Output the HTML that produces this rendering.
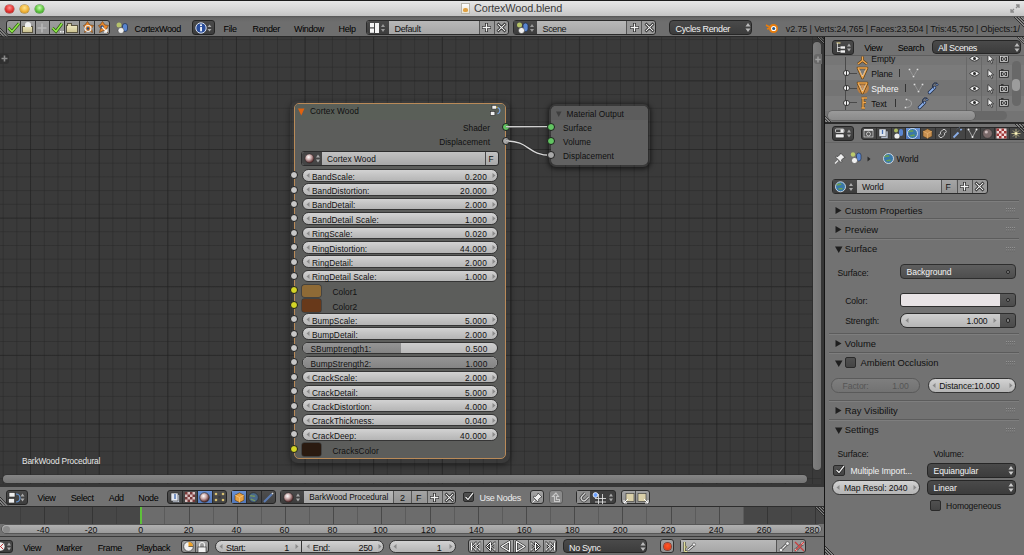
<!DOCTYPE html>
<html><head><meta charset="utf-8">
<style>
*{box-sizing:border-box;margin:0;padding:0}
html,body{width:1024px;height:555px;overflow:hidden;background:#3a3a3a;font-family:"Liberation Sans",sans-serif}
.a{position:absolute}
svg{display:block;overflow:visible}
.t{position:absolute;white-space:nowrap;line-height:1;font-family:"Liberation Sans",sans-serif;color:#000}
#title{left:0;top:0;width:1024px;height:16px;background:linear-gradient(#e6e6e6,#d6d6d6 55%,#c4c4c4);border-top:1px solid #1a1a1a}
#info{left:0;top:16px;width:1024px;height:21px;background:linear-gradient(#555,#686868 2px,#6e6e6e 6px,#6e6e6e);border-bottom:1px solid #2a2a2a}
#node{left:0;top:37px;width:824px;height:450px;background-color:#3a3a3a;
 background-image:
 linear-gradient(90deg, rgba(30,30,30,.42) 1px, transparent 1px),
 linear-gradient(rgba(30,30,30,.42) 1px, transparent 1px),
 linear-gradient(90deg, rgba(40,40,40,.5) 1px, transparent 1px),
 linear-gradient(rgba(40,40,40,.5) 1px, transparent 1px);
 background-size:68.65px 68.65px,68.65px 68.65px,13.73px 13.73px,13.73px 13.73px;
 background-position:30.1px 43.4px,30.1px 43.4px,2.64px 2.2px,2.64px 2.2px}
#sep{left:824px;top:37px;width:1px;height:518px;background:#232323}
#nhead{left:0;top:487px;width:824px;height:20px;background:#727272;border-bottom:1px solid #2d2d2d}
#tl{left:0;top:507px;width:824px;height:30px;background:#727272}
#thead{left:0;top:537px;width:824px;height:18px;background:#727272}
#outl{left:825px;top:37px;width:199px;height:86px;background:#727272}
#prop{left:825px;top:123px;width:199px;height:432px;background:#727272}

.bx{position:absolute;border:1px solid #1e1e1e;border-radius:3px;overflow:hidden}
.tool{background:linear-gradient(#a3a3a3,#8f8f8f)}
.dk{background:linear-gradient(#4a4a4a,#3c3c3c)}
.fld{background:linear-gradient(#b8b8b8,#a6a6a6)}
.num{background:linear-gradient(#c8c8c8,#b0b0b0 60%,#a8a8a8);border-radius:7px}
.hx{font-size:9px;letter-spacing:-0.35px;color:#000}
.vs{position:absolute;top:0;bottom:0;width:1px;background:#3a3a3a}
.ud{position:absolute;width:0;height:0;border-left:2.5px solid transparent;border-right:2.5px solid transparent}

.nt{font-size:8.3px;color:#101010;letter-spacing:0.05px}
.nv{font-size:8.3px;color:#111;letter-spacing:0.25px}
.nrow{border-radius:6.4px;border-color:#353535;background:linear-gradient(#d2d2d2,#bdbdbd 70%,#b5b5b5)}
.sk{position:absolute;width:8px;height:8px;border-radius:50%;border:0.9px solid #1c1c1c}

.ot{font-size:8.6px;color:#111;letter-spacing:-0.1px}
.pt{font-size:8.6px;color:#111;letter-spacing:-0.1px}
.ph{font-size:9.4px;color:#111;letter-spacing:0px}
</style></head><body>
<div id="title" class="a"></div>
<div class="a" style="left:5.3px;top:4.5px;width:8.6px;height:8.6px;border-radius:50%;background:radial-gradient(circle at 50% 35%,#ff8f8f,#e2332f 55%,#a61c1c);box-shadow:0 0 0 .5px #9a3a3a"></div>
<div class="a" style="left:20.3px;top:4.5px;width:8.6px;height:8.6px;border-radius:50%;background:radial-gradient(circle at 50% 35%,#ffe690,#f1b43a 55%,#b57c17);box-shadow:0 0 0 .5px #a0781e"></div>
<div class="a" style="left:35.3px;top:4.5px;width:8.6px;height:8.6px;border-radius:50%;background:radial-gradient(circle at 50% 35%,#c8ffb0,#5fc53f 55%,#2f8a1e);box-shadow:0 0 0 .5px #3d8a2e"></div>
<div class="a" style="left:461px;top:3px;width:9px;height:11px;background:linear-gradient(#fdfdfd,#e9e3d2);border:1px solid #b9b5aa"><div class="a" style="left:1px;top:4px;width:5px;height:4px;background:#e0a040;border-radius:40%"></div></div>
<div class="t" style="left:474px;top:3.4px;font-size:10.9px;color:#3c3c3c;letter-spacing:-0.12px">CortexWood.blend</div>
<div class="a" style="left:1010px;top:4px;width:10px;height:9px"><svg width="10" height="9"><path d="M6 1h3v3M9 1L6 4M4 8H1V5M1 8l3-3" stroke="#8a8a8a" stroke-width="1.3" fill="none"/></svg></div>

<div id="info" class="a"></div>
<!-- info header -->
<div class="bx tool" style="left:6px;top:20px;width:104px;height:15px;background:linear-gradient(#9c9c9c,#929292);border-color:#2a2a2a"></div>
<div class="a" style="left:0;top:27px"><svg width="9" height="10"><path d="M0 1l8 8.5M0 4l5 5.5M0 7l2.5 2.8" stroke="#2a2a2a" stroke-width="1"/><path d="M0 2l7.2 7.8M0 5l4.3 4.8" stroke="#a8a8a8" stroke-width=".6"/></svg></div>
<div class="a" style="left:19.8px;top:21px;width:1px;height:13px;background:#333"></div>
<div class="a" style="left:34.5px;top:21px;width:1px;height:13px;background:#333"></div>
<div class="a" style="left:49.3px;top:21px;width:1px;height:13px;background:#333"></div>
<div class="a" style="left:64.3px;top:21px;width:1px;height:13px;background:#333"></div>
<div class="a" style="left:79.3px;top:21px;width:1px;height:13px;background:#333"></div>
<div class="a" style="left:94.3px;top:21px;width:1px;height:13px;background:#333"></div>
<div class="a" style="left:7px;top:22px"><svg width="13" height="11"><path d="M1.5 6l3.5 3.5L12 1.5" stroke="#2d5a10" stroke-width="3" fill="none"/><path d="M1.5 6l3.5 3.5L12 1.5" stroke="#8ee84a" stroke-width="1.6" fill="none"/></svg></div>
<div class="a" style="left:21.5px;top:22px;width:11px;height:11px"><div class="a" style="left:0;top:4px;width:11px;height:7px;background:linear-gradient(#e8e2b8,#c9c08f);border:1px solid #5a5440"></div><div class="a" style="left:3px;top:0;width:6px;height:5px;background:#f0f0f0;border-radius:3px 3px 0 0"></div></div>
<div class="a" style="left:37px;top:22.5px"><svg width="10" height="10"><path d="M5 0.5v9M0.5 5h9" stroke="#b8b8b8" stroke-width="1.6"/></svg></div>
<div class="a" style="left:51px;top:22px"><svg width="13" height="11"><path d="M1.5 6l3.5 3.5L11 1.5" stroke="#2d5a10" stroke-width="3" fill="none"/><path d="M1.5 6l3.5 3.5L11 1.5" stroke="#8ee84a" stroke-width="1.6" fill="none"/><rect x="9" y="9" width="1.5" height="1.5" fill="#eee"/><rect x="11.5" y="9" width="1.5" height="1.5" fill="#eee"/></svg></div>
<div class="a" style="left:66px;top:23px;width:12px;height:10px"><div class="a" style="left:0;top:2px;width:12px;height:8px;background:linear-gradient(#ece6bd,#cdc392);border:1px solid #5a5440"></div><div class="a" style="left:1px;top:0;width:5px;height:3px;background:#d9d2a8;border:1px solid #5a5440;border-bottom:none"></div></div>
<div class="a" style="left:81px;top:21px"><svg width="13" height="13"><path d="M6.5 0.5L9 4l3.5 .5-2 3 1 4-4-2-4 2 1-4-2-3L4 4z" fill="#e8862a" stroke="#6a3a10" stroke-width=".6"/><circle cx="7" cy="7.5" r="3" fill="none" stroke="#eee" stroke-width="1.2"/><circle cx="7" cy="7.5" r="1.3" fill="#2a4a7a"/></svg></div>
<div class="a" style="left:96px;top:21px"><svg width="13" height="13"><path d="M6.5 0.5L9 4l3.5 .5-2 3 1 4-4-2-4 2 1-4-2-3L4 4z" fill="#e8862a" stroke="#6a3a10" stroke-width=".6"/><circle cx="6" cy="6" r="1.8" fill="#2a4a7a"/><path d="M6 6l5 5M11 11h-3M11 11v-3" stroke="#f4f4f4" stroke-width="1.3"/></svg></div>
<div class="a" style="left:116px;top:22px"><svg width="14" height="12"><circle cx="3" cy="3" r="2.5" fill="#c8d86a" opacity=".8"/><rect x="6.5" y="1.5" width="5" height="8" rx="2.5" fill="#5a86d0" stroke="#1c2c4a" stroke-width=".7"/><circle cx="5" cy="8.5" r="3" fill="#f0f0f0" stroke="#333" stroke-width=".5"/></svg></div>
<div class="t hx" style="left:134.5px;top:24.5px">CortexWood</div>
<div class="bx dk" style="left:192px;top:20px;width:23px;height:15px;border-color:#242424"></div>
<div class="a" style="left:195px;top:21.5px"><svg width="18" height="12"><circle cx="6" cy="6" r="5.2" fill="#2a4d9a" stroke="#d8e0ee" stroke-width="1"/><rect x="5.2" y="5" width="1.7" height="4.3" fill="#fff"/><circle cx="6" cy="3.3" r="1" fill="#fff"/><path d="M12.5 5l2-2.5 2 2.5zM12.5 7l2 2.5 2-2.5z" fill="#aaa"/></svg></div>
<div class="t hx" style="left:223.5px;top:24.5px">File</div>
<div class="t hx" style="left:252.5px;top:24.5px">Render</div>
<div class="t hx" style="left:294px;top:24.5px">Window</div>
<div class="t hx" style="left:338.5px;top:24.5px">Help</div>
<!-- layout widget -->
<div class="bx" style="left:365.5px;top:20px;width:143px;height:15px;border-color:#2a2a2a;background:#999"></div>
<div class="a dk" style="left:366.5px;top:21px;width:22.5px;height:13px;border-radius:2px 0 0 2px"></div>
<div class="a" style="left:370px;top:22.5px"><svg width="16" height="11"><rect x="0" y="0" width="4" height="4.3" fill="#f2f2f2"/><rect x="0" y="5.5" width="4" height="4.3" fill="#f2f2f2"/><rect x="5" y="0" width="4" height="10" fill="#f2f2f2"/><path d="M11 4l2-3 2 3zM11 6l2 3 2-3z" fill="#999"/></svg></div>
<div class="a fld" style="left:389px;top:21px;width:89.5px;height:13px"></div>
<div class="t hx" style="left:394.5px;top:24.5px;color:#141414">Default</div>
<div class="a" style="left:478.5px;top:21px;width:1px;height:13px;background:#555"></div>
<div class="a" style="left:493.5px;top:21px;width:1px;height:13px;background:#555"></div>
<div class="a" style="left:481px;top:22px"><svg width="11" height="11"><path d="M5.5 1v9M1 5.5h9" stroke="#111" stroke-width="2.6"/><path d="M5.5 1.5v8M1.5 5.5h8" stroke="#f4f4f4" stroke-width="1.3"/></svg></div>
<div class="a" style="left:496px;top:22px"><svg width="11" height="11"><path d="M1.5 1.5l8 8M9.5 1.5l-8 8" stroke="#111" stroke-width="2.6"/><path d="M1.8 1.8l7.4 7.4M9.2 1.8l-7.4 7.4" stroke="#f4f4f4" stroke-width="1.2"/></svg></div>
<!-- scene widget -->
<div class="bx" style="left:513.3px;top:20px;width:143px;height:15px;border-color:#2a2a2a;background:#999"></div>
<div class="a dk" style="left:514.3px;top:21px;width:22.5px;height:13px"></div>
<div class="a" style="left:516px;top:21.5px"><svg width="19" height="12"><circle cx="3.5" cy="3" r="2.5" fill="#c8d86a" opacity=".85"/><rect x="7" y="1" width="5" height="8.5" rx="2.5" fill="#5a86d0" stroke="#1c2c4a" stroke-width=".7"/><circle cx="5.5" cy="8.5" r="3" fill="#f0f0f0" stroke="#333" stroke-width=".5"/><path d="M14 5l2-3 2 3zM14 7l2 3 2-3z" fill="#999"/></svg></div>
<div class="a fld" style="left:536.7px;top:21px;width:89.5px;height:13px"></div>
<div class="t hx" style="left:542.5px;top:24.5px;color:#141414">Scene</div>
<div class="a" style="left:626.2px;top:21px;width:1px;height:13px;background:#555"></div>
<div class="a" style="left:641.4px;top:21px;width:1px;height:13px;background:#555"></div>
<div class="a" style="left:628.5px;top:22px"><svg width="11" height="11"><path d="M5.5 1v9M1 5.5h9" stroke="#111" stroke-width="2.6"/><path d="M5.5 1.5v8M1.5 5.5h8" stroke="#f4f4f4" stroke-width="1.3"/></svg></div>
<div class="a" style="left:643.5px;top:22px"><svg width="11" height="11"><path d="M1.5 1.5l8 8M9.5 1.5l-8 8" stroke="#111" stroke-width="2.6"/><path d="M1.8 1.8l7.4 7.4M9.2 1.8l-7.4 7.4" stroke="#f4f4f4" stroke-width="1.2"/></svg></div>
<!-- render engine -->
<div class="bx dk" style="left:669.4px;top:20px;width:83px;height:15px;border-color:#262626;border-radius:4px"></div>
<div class="t hx" style="left:675.5px;top:24.5px;color:#f2f2f2">Cycles Render</div>
<div class="a" style="left:745px;top:22px"><svg width="6" height="11"><path d="M0.5 4.5l2.5-3.5 2.5 3.5zM0.5 6.5l2.5 3.5 2.5-3.5z" fill="#bbb"/></svg></div>
<div class="a" style="left:765px;top:21.5px"><svg width="14" height="12"><path d="M1 3l4 2.5M2 7l4-1" stroke="#e87d0d" stroke-width="1.6"/><circle cx="8.5" cy="6.5" r="4.5" fill="#e87d0d"/><circle cx="8.7" cy="6.5" r="2.6" fill="#fff"/><circle cx="8.7" cy="6.5" r="1.5" fill="#265787"/></svg></div>
<div class="t hx" style="left:785.8px;top:24.5px;color:#141414;letter-spacing:-0.12px">v2.75 | Verts:24,765 | Faces:23,504 | Tris:45,750 | Objects:1/9</div>
<div class="a" style="left:1020px;top:17px;width:4px;height:19px;background:#6e6e6e"></div>
<div class="a" style="left:1013px;top:17px"><svg width="11" height="10"><path d="M1 0l10 10M4 0l7 7M7 0l4 4" stroke="#2e2e2e" stroke-width="1"/><path d="M2 0l9 9M5 0l6 6M8 0l3 3" stroke="#a8a8a8" stroke-width=".6"/></svg></div>

<div id="node" class="a"></div>
<!--NODES-->
<div class="a" style="left:290px;top:101px;width:220px;height:362px;border-radius:8px;box-shadow:0 2px 6px rgba(0,0,0,.45)"></div>
<div class="a" style="left:293.5px;top:103px;width:212.5px;height:355.5px;border-radius:5px;border:1.2px solid #b98a58;background:#5c5d5b;overflow:hidden"><div class="a" style="left:0;top:0;width:100%;height:16px;background:#5a5f58"></div></div>
<div class="a" style="left:297.5px;top:108px"><svg width="7" height="8"><path d="M0 0.5h6.5L3.25 7.5z" fill="#e0620f"/></svg></div>
<div class="t nt" style="left:310px;top:106.8px">Cortex Wood</div>
<div class="a" style="left:489.5px;top:104.5px"><svg width="12" height="11"><rect x="2" y="0.3" width="4.6" height="3.8" fill="#f0f0f0" stroke="#2a2a2a" stroke-width=".6"/><rect x="0.3" y="6.5" width="4.6" height="3.8" fill="#f0f0f0" stroke="#2a2a2a" stroke-width=".6"/><path d="M7.5 2.5a3.2 3.2 0 0 1 0 6.2" stroke="#7aa6e0" stroke-width="1.1" fill="none"/><circle cx="6.8" cy="2.3" r=".7" fill="#e8c040"/></svg></div>
<div class="t nt" style="left:440px;top:124px;width:50px;text-align:right">Shader</div>
<div class="t nt" style="left:420px;top:138px;width:70px;text-align:right">Displacement</div>
<div class="bx" style="left:301px;top:151px;width:197.5px;height:14.5px;border-color:#2c2c2c;background:linear-gradient(#c2c2c2,#a8a8a8)"></div>
<div class="a" style="left:302px;top:152px;width:20px;height:12.5px;background:#454545;border-radius:2px 0 0 2px"></div>
<div class="a" style="left:303.5px;top:153px"><svg width="17" height="11"><defs><radialGradient id="ball" cx="40%" cy="35%" r="60%"><stop offset="0" stop-color="#fff"/><stop offset=".5" stop-color="#c9a9a9"/><stop offset="1" stop-color="#5a3030"/></radialGradient></defs><circle cx="5.5" cy="5.5" r="4.6" fill="url(#ball)" stroke="#222" stroke-width=".5"/><path d="M12 4.5l2-3 2 3zM12 6.5l2 3 2-3z" fill="#aaa"/></svg></div>
<div class="a" style="left:484.5px;top:152px;width:1px;height:12.5px;background:#4a4a4a"></div>
<div class="t nt" style="left:327px;top:154.5px;color:#111">Cortex Wood</div>
<div class="t nt" style="left:488.5px;top:154.5px;color:#111">F</div>
<div class="bx nrow" style="left:301.5px;top:168.90px;width:196.5px;height:12.8px"></div>
<div class="a" style="left:305.5px;top:172.90px"><svg width="4" height="5"><path d="M3.5 0L0.5 2.5 3.5 5z" fill="#8a8a8a"/></svg></div>
<div class="a" style="left:491.5px;top:172.90px"><svg width="4" height="5"><path d="M0.5 0L3.5 2.5 0.5 5z" fill="#8a8a8a"/></svg></div>
<div class="t nt" style="left:312px;top:172.60px;color:#111">BandScale:</div>
<div class="t nv" style="left:400px;top:172.60px;width:87px;text-align:right">0.200</div>
<div class="bx nrow" style="left:301.5px;top:183.30px;width:196.5px;height:12.8px"></div>
<div class="a" style="left:305.5px;top:187.30px"><svg width="4" height="5"><path d="M3.5 0L0.5 2.5 3.5 5z" fill="#8a8a8a"/></svg></div>
<div class="a" style="left:491.5px;top:187.30px"><svg width="4" height="5"><path d="M0.5 0L3.5 2.5 0.5 5z" fill="#8a8a8a"/></svg></div>
<div class="t nt" style="left:312px;top:187.00px;color:#111">BandDistortion:</div>
<div class="t nv" style="left:400px;top:187.00px;width:87px;text-align:right">20.000</div>
<div class="bx nrow" style="left:301.5px;top:197.70px;width:196.5px;height:12.8px"></div>
<div class="a" style="left:305.5px;top:201.70px"><svg width="4" height="5"><path d="M3.5 0L0.5 2.5 3.5 5z" fill="#8a8a8a"/></svg></div>
<div class="a" style="left:491.5px;top:201.70px"><svg width="4" height="5"><path d="M0.5 0L3.5 2.5 0.5 5z" fill="#8a8a8a"/></svg></div>
<div class="t nt" style="left:312px;top:201.40px;color:#111">BandDetail:</div>
<div class="t nv" style="left:400px;top:201.40px;width:87px;text-align:right">2.000</div>
<div class="bx nrow" style="left:301.5px;top:212.10px;width:196.5px;height:12.8px"></div>
<div class="a" style="left:305.5px;top:216.10px"><svg width="4" height="5"><path d="M3.5 0L0.5 2.5 3.5 5z" fill="#8a8a8a"/></svg></div>
<div class="a" style="left:491.5px;top:216.10px"><svg width="4" height="5"><path d="M0.5 0L3.5 2.5 0.5 5z" fill="#8a8a8a"/></svg></div>
<div class="t nt" style="left:312px;top:215.80px;color:#111">BandDetail Scale:</div>
<div class="t nv" style="left:400px;top:215.80px;width:87px;text-align:right">1.000</div>
<div class="bx nrow" style="left:301.5px;top:226.50px;width:196.5px;height:12.8px"></div>
<div class="a" style="left:305.5px;top:230.50px"><svg width="4" height="5"><path d="M3.5 0L0.5 2.5 3.5 5z" fill="#8a8a8a"/></svg></div>
<div class="a" style="left:491.5px;top:230.50px"><svg width="4" height="5"><path d="M0.5 0L3.5 2.5 0.5 5z" fill="#8a8a8a"/></svg></div>
<div class="t nt" style="left:312px;top:230.20px;color:#111">RingScale:</div>
<div class="t nv" style="left:400px;top:230.20px;width:87px;text-align:right">0.020</div>
<div class="bx nrow" style="left:301.5px;top:240.90px;width:196.5px;height:12.8px"></div>
<div class="a" style="left:305.5px;top:244.90px"><svg width="4" height="5"><path d="M3.5 0L0.5 2.5 3.5 5z" fill="#8a8a8a"/></svg></div>
<div class="a" style="left:491.5px;top:244.90px"><svg width="4" height="5"><path d="M0.5 0L3.5 2.5 0.5 5z" fill="#8a8a8a"/></svg></div>
<div class="t nt" style="left:312px;top:244.60px;color:#111">RingDistortion:</div>
<div class="t nv" style="left:400px;top:244.60px;width:87px;text-align:right">44.000</div>
<div class="bx nrow" style="left:301.5px;top:255.30px;width:196.5px;height:12.8px"></div>
<div class="a" style="left:305.5px;top:259.30px"><svg width="4" height="5"><path d="M3.5 0L0.5 2.5 3.5 5z" fill="#8a8a8a"/></svg></div>
<div class="a" style="left:491.5px;top:259.30px"><svg width="4" height="5"><path d="M0.5 0L3.5 2.5 0.5 5z" fill="#8a8a8a"/></svg></div>
<div class="t nt" style="left:312px;top:259.00px;color:#111">RingDetail:</div>
<div class="t nv" style="left:400px;top:259.00px;width:87px;text-align:right">2.000</div>
<div class="bx nrow" style="left:301.5px;top:269.70px;width:196.5px;height:12.8px"></div>
<div class="a" style="left:305.5px;top:273.70px"><svg width="4" height="5"><path d="M3.5 0L0.5 2.5 3.5 5z" fill="#8a8a8a"/></svg></div>
<div class="a" style="left:491.5px;top:273.70px"><svg width="4" height="5"><path d="M0.5 0L3.5 2.5 0.5 5z" fill="#8a8a8a"/></svg></div>
<div class="t nt" style="left:312px;top:273.40px;color:#111">RingDetail Scale:</div>
<div class="t nv" style="left:400px;top:273.40px;width:87px;text-align:right">1.000</div>
<div class="a" style="left:301.5px;top:284.90px;width:19px;height:12.6px;border-radius:2.5px;background:#8e6a36;box-shadow:0 0 0 .7px #3a3a3a"></div>
<div class="t nt" style="left:332.5px;top:288.10px;color:#111">Color1</div>
<div class="a" style="left:301.5px;top:299.30px;width:19px;height:12.6px;border-radius:2.5px;background:#68391a;box-shadow:0 0 0 .7px #3a3a3a"></div>
<div class="t nt" style="left:332.5px;top:302.50px;color:#111">Color2</div>
<div class="bx nrow" style="left:301.5px;top:312.90px;width:196.5px;height:12.8px"></div>
<div class="a" style="left:305.5px;top:316.90px"><svg width="4" height="5"><path d="M3.5 0L0.5 2.5 3.5 5z" fill="#8a8a8a"/></svg></div>
<div class="a" style="left:491.5px;top:316.90px"><svg width="4" height="5"><path d="M0.5 0L3.5 2.5 0.5 5z" fill="#8a8a8a"/></svg></div>
<div class="t nt" style="left:312px;top:316.60px;color:#111">BumpScale:</div>
<div class="t nv" style="left:400px;top:316.60px;width:87px;text-align:right">5.000</div>
<div class="bx nrow" style="left:301.5px;top:327.30px;width:196.5px;height:12.8px"></div>
<div class="a" style="left:305.5px;top:331.30px"><svg width="4" height="5"><path d="M3.5 0L0.5 2.5 3.5 5z" fill="#8a8a8a"/></svg></div>
<div class="a" style="left:491.5px;top:331.30px"><svg width="4" height="5"><path d="M0.5 0L3.5 2.5 0.5 5z" fill="#8a8a8a"/></svg></div>
<div class="t nt" style="left:312px;top:331.00px;color:#111">BumpDetail:</div>
<div class="t nv" style="left:400px;top:331.00px;width:87px;text-align:right">2.000</div>
<div class="bx" style="left:301.5px;top:341.70px;width:196.5px;height:12.8px;border-radius:6.4px;border-color:#333;background:linear-gradient(#cdcdcd,#b9b9b9)"><div class="a" style="left:0;top:0;bottom:0;width:50.6%;background:linear-gradient(#959595,#848484)"></div></div>
<div class="t nt" style="left:310.5px;top:345.40px;color:#111">SBumptrength1:</div>
<div class="t nv" style="left:400px;top:345.40px;width:87.5px;text-align:right">0.500</div>
<div class="bx" style="left:301.5px;top:356.10px;width:196.5px;height:12.8px;border-radius:6.4px;border-color:#333;background:linear-gradient(#cdcdcd,#b9b9b9)"><div class="a" style="left:0;top:0;bottom:0;width:100%;background:linear-gradient(#959595,#848484)"></div></div>
<div class="t nt" style="left:310.5px;top:359.80px;color:#111">BumpStrength2:</div>
<div class="t nv" style="left:400px;top:359.80px;width:87.5px;text-align:right">1.000</div>
<div class="bx nrow" style="left:301.5px;top:370.50px;width:196.5px;height:12.8px"></div>
<div class="a" style="left:305.5px;top:374.50px"><svg width="4" height="5"><path d="M3.5 0L0.5 2.5 3.5 5z" fill="#8a8a8a"/></svg></div>
<div class="a" style="left:491.5px;top:374.50px"><svg width="4" height="5"><path d="M0.5 0L3.5 2.5 0.5 5z" fill="#8a8a8a"/></svg></div>
<div class="t nt" style="left:312px;top:374.20px;color:#111">CrackScale:</div>
<div class="t nv" style="left:400px;top:374.20px;width:87px;text-align:right">2.000</div>
<div class="bx nrow" style="left:301.5px;top:384.90px;width:196.5px;height:12.8px"></div>
<div class="a" style="left:305.5px;top:388.90px"><svg width="4" height="5"><path d="M3.5 0L0.5 2.5 3.5 5z" fill="#8a8a8a"/></svg></div>
<div class="a" style="left:491.5px;top:388.90px"><svg width="4" height="5"><path d="M0.5 0L3.5 2.5 0.5 5z" fill="#8a8a8a"/></svg></div>
<div class="t nt" style="left:312px;top:388.60px;color:#111">CrackDetail:</div>
<div class="t nv" style="left:400px;top:388.60px;width:87px;text-align:right">5.000</div>
<div class="bx nrow" style="left:301.5px;top:399.30px;width:196.5px;height:12.8px"></div>
<div class="a" style="left:305.5px;top:403.30px"><svg width="4" height="5"><path d="M3.5 0L0.5 2.5 3.5 5z" fill="#8a8a8a"/></svg></div>
<div class="a" style="left:491.5px;top:403.30px"><svg width="4" height="5"><path d="M0.5 0L3.5 2.5 0.5 5z" fill="#8a8a8a"/></svg></div>
<div class="t nt" style="left:312px;top:403.00px;color:#111">CrackDistortion:</div>
<div class="t nv" style="left:400px;top:403.00px;width:87px;text-align:right">4.000</div>
<div class="bx nrow" style="left:301.5px;top:413.70px;width:196.5px;height:12.8px"></div>
<div class="a" style="left:305.5px;top:417.70px"><svg width="4" height="5"><path d="M3.5 0L0.5 2.5 3.5 5z" fill="#8a8a8a"/></svg></div>
<div class="a" style="left:491.5px;top:417.70px"><svg width="4" height="5"><path d="M0.5 0L3.5 2.5 0.5 5z" fill="#8a8a8a"/></svg></div>
<div class="t nt" style="left:312px;top:417.40px;color:#111">CrackThickness:</div>
<div class="t nv" style="left:400px;top:417.40px;width:87px;text-align:right">0.040</div>
<div class="bx nrow" style="left:301.5px;top:428.10px;width:196.5px;height:12.8px"></div>
<div class="a" style="left:305.5px;top:432.10px"><svg width="4" height="5"><path d="M3.5 0L0.5 2.5 3.5 5z" fill="#8a8a8a"/></svg></div>
<div class="a" style="left:491.5px;top:432.10px"><svg width="4" height="5"><path d="M0.5 0L3.5 2.5 0.5 5z" fill="#8a8a8a"/></svg></div>
<div class="t nt" style="left:312px;top:431.80px;color:#111">CrackDeep:</div>
<div class="t nv" style="left:400px;top:431.80px;width:87px;text-align:right">40.000</div>
<div class="a" style="left:301.5px;top:443.30px;width:19px;height:12.6px;border-radius:2.5px;background:#2a1a10;box-shadow:0 0 0 .7px #3a3a3a"></div>
<div class="t nt" style="left:332.5px;top:446.50px;color:#111">CracksColor</div>
<div class="sk" style="left:289.80px;top:171.20px;background:#c7c7c7"></div>
<div class="sk" style="left:289.80px;top:185.60px;background:#c7c7c7"></div>
<div class="sk" style="left:289.80px;top:200.00px;background:#c7c7c7"></div>
<div class="sk" style="left:289.80px;top:214.40px;background:#c7c7c7"></div>
<div class="sk" style="left:289.80px;top:228.80px;background:#c7c7c7"></div>
<div class="sk" style="left:289.80px;top:243.20px;background:#c7c7c7"></div>
<div class="sk" style="left:289.80px;top:257.60px;background:#c7c7c7"></div>
<div class="sk" style="left:289.80px;top:272.00px;background:#c7c7c7"></div>
<div class="sk" style="left:289.80px;top:286.40px;background:#d4d526"></div>
<div class="sk" style="left:289.80px;top:300.80px;background:#d4d526"></div>
<div class="sk" style="left:289.80px;top:315.20px;background:#c7c7c7"></div>
<div class="sk" style="left:289.80px;top:329.60px;background:#c7c7c7"></div>
<div class="sk" style="left:289.80px;top:344.00px;background:#c7c7c7"></div>
<div class="sk" style="left:289.80px;top:358.40px;background:#c7c7c7"></div>
<div class="sk" style="left:289.80px;top:372.80px;background:#c7c7c7"></div>
<div class="sk" style="left:289.80px;top:387.20px;background:#c7c7c7"></div>
<div class="sk" style="left:289.80px;top:401.60px;background:#c7c7c7"></div>
<div class="sk" style="left:289.80px;top:416.00px;background:#c7c7c7"></div>
<div class="sk" style="left:289.80px;top:430.40px;background:#c7c7c7"></div>
<div class="sk" style="left:289.80px;top:444.80px;background:#d4d526"></div>
<div class="sk" style="left:501.6px;top:122.8px;background:#62c462"></div>
<div class="sk" style="left:501.6px;top:136.9px;background:#a9a9a9"></div>
<div class="a" style="left:549px;top:104px;width:101px;height:63px;border-radius:7px;box-shadow:0 1px 5px 1px rgba(0,0,0,.6)"></div>
<div class="a" style="left:551px;top:106px;width:97px;height:58.5px;border-radius:5px;background:#616161;overflow:hidden"><div class="a" style="left:0;top:0;width:100%;height:14px;background:#5c5c5c"></div></div>
<div class="a" style="left:555.5px;top:111px"><svg width="6" height="6"><path d="M0 0.5h5.5L2.75 6z" fill="#3e3e3e"/></svg></div>
<div class="t nt" style="left:566.5px;top:109.5px">Material Output</div>
<div class="t nt" style="left:563px;top:123.8px">Surface</div>
<div class="t nt" style="left:563px;top:138px">Volume</div>
<div class="t nt" style="left:563px;top:152.3px">Displacement</div>
<svg class="a" style="left:0;top:0" width="1024" height="555"><path d="M506 126.8L551.3 126.6" stroke="#1e1e1e" stroke-width="2.6" fill="none" opacity=".5"/><path d="M506 126.8L551.3 126.6" stroke="#cfcfcf" stroke-width="1.4" fill="none"/><path d="M506 140.9C530 140.9 527 155.3 551.3 155.3" stroke="#1e1e1e" stroke-width="2.6" fill="none" opacity=".5"/><path d="M506 140.9C530 140.9 527 155.3 551.3 155.3" stroke="#d8d8d8" stroke-width="1.4" fill="none"/></svg>
<div class="sk" style="left:547.3px;top:122.6px;background:#62c462"></div>
<div class="sk" style="left:547.3px;top:137px;background:#62c462"></div>
<div class="sk" style="left:547.3px;top:151.3px;background:#a9a9a9"></div>
<!--/NODES-->
<div id="sep" class="a"></div>
<div id="nhead" class="a"></div>
<div id="tl" class="a"></div>
<div id="thead" class="a"></div>
<!--BOTTOM-->
<div class="a" style="left:0;top:53.5px;width:8.5px;height:10px;background:#303030;border-radius:0 3px 3px 0"></div>
<div class="a" style="left:1px;top:55px"><svg width="7" height="7"><path d="M3.5 0.5v6M0.5 3.5h6" stroke="#8a8a8a" stroke-width="1.6"/></svg></div>
<div class="t" style="left:22px;top:457px;font-size:8.3px;color:#e6e6e6;letter-spacing:-0.15px">BarkWood Procedural</div>
<div class="a" style="left:812.5px;top:37px;width:11.5px;height:450px;background:transparent"></div>
<div class="a" style="left:812.8px;top:42px;width:8.2px;height:428px;border-radius:4.1px;background:linear-gradient(90deg,#7e7e7e,#747474);box-shadow:0 0 0 .6px #2e2e2e"></div>
<div class="a" style="left:821px;top:37px;width:3px;height:450px;background:#363636"></div>
<div class="a" style="left:813.8px;top:54px;width:8px;height:9.8px;border-radius:3px 0 0 3px;background:#686868"></div>
<div class="a" style="left:815px;top:55.5px"><svg width="6" height="7"><path d="M3 0.5v6M0.3 3.5h5.4" stroke="#a0a0a0" stroke-width="1.4"/></svg></div>
<div class="a" style="left:0;top:483.5px;width:821px;height:3.5px;background:#363636"></div>
<div class="a" style="left:2.8px;top:474.8px;width:804px;height:8.2px;border-radius:4.1px;background:linear-gradient(#858585,#747474);box-shadow:0 0 0 .6px #2e2e2e"></div>
<div class="a" style="left:814px;top:37px"><svg width="10" height="10"><path d="M3 0l7 7M5.5 0l4.5 4.5M8 0l2 2" stroke="#222" stroke-width="1"/><path d="M4 0l6 6M6.5 0l3.5 3.5" stroke="#9a9a9a" stroke-width=".6"/></svg></div>
<div class="a" style="left:0;top:496px"><svg width="9" height="10"><path d="M0 1l8 8.5M0 4l5 5.5M0 7l2.5 2.8" stroke="#2a2a2a" stroke-width="1"/><path d="M0 2l7.2 7.8M0 5l4.3 4.8" stroke="#a8a8a8" stroke-width=".6"/></svg></div>
<div class="bx" style="left:5.5px;top:490px;width:22px;height:14.5px;border-color:#262626;background:linear-gradient(#4a4a4a,#3d3d3d)"></div>
<div class="a" style="left:8px;top:491.5px"><svg width="18" height="12"><rect x="1" y="0.5" width="6" height="4.5" fill="#eee" stroke="#222" stroke-width=".6"/><rect x="0.5" y="6.5" width="6" height="4.5" fill="#eee" stroke="#222" stroke-width=".6"/><path d="M8 2a4 4 0 0 1 0 8" stroke="#6a9ad8" stroke-width="1.2" fill="none"/><path d="M12.5 4.5l2-3 2 3zM12.5 6.5l2 3 2-3z" fill="#aaa"/></svg></div>
<div class="t hx" style="left:37.5px;top:494px">View</div>
<div class="t hx" style="left:70.7px;top:494px">Select</div>
<div class="t hx" style="left:108.8px;top:494px">Add</div>
<div class="t hx" style="left:138.3px;top:494px">Node</div>
<div class="bx" style="left:167.4px;top:490.2px;width:59.4px;height:14.3px;border-color:#242424;background:linear-gradient(#4e4e4e,#424242)"></div>
<div class="a" style="left:197px;top:491.2px;width:15px;height:12.3px;background:linear-gradient(#6a92d4,#5278bb)"></div>
<div class="a" style="left:182.2px;top:491.2px;width:1px;height:12.3px;background:#2a2a2a"></div>
<div class="a" style="left:197px;top:491.2px;width:1px;height:12.3px;background:#2a2a2a"></div>
<div class="a" style="left:212px;top:491.2px;width:1px;height:12.3px;background:#2a2a2a"></div>
<div class="a" style="left:170px;top:492px"><svg width="11" height="11"><rect x="2.5" y="2.5" width="7" height="8" fill="#c8d0e0" stroke="#333" stroke-width=".6"/><rect x="1" y="1" width="7" height="8" fill="#e4e8f0" stroke="#333" stroke-width=".6"/><path d="M5 2v5" stroke="#4a70b0" stroke-width="1.4"/></svg></div>
<div class="a" style="left:185px;top:492px"><svg width="10" height="10"><rect x="0" y="0" width="10" height="10" fill="#d8c0c0"/><path d="M0 0h2.5v2.5H0zM5 0h2.5v2.5H5zM2.5 2.5h2.5V5H2.5zM7.5 2.5H10V5H7.5zM0 5h2.5v2.5H0zM5 5h2.5v2.5H5zM2.5 7.5h2.5V10H2.5zM7.5 7.5H10V10H7.5z" fill="#7a3a3a"/></svg></div>
<div class="a" style="left:199px;top:491.8px"><svg width="11" height="11"><circle cx="5.5" cy="5.5" r="4.8" fill="url(#ball)" stroke="#222" stroke-width=".6"/></svg></div>
<div class="a" style="left:214px;top:492px"><svg width="11" height="10"><circle cx="2" cy="2" r="1.3" fill="#d8c070"/><circle cx="9" cy="2" r="1.3" fill="#d8c070"/><circle cx="5.5" cy="5" r="1.3" fill="#3a3a3a"/><circle cx="2" cy="8" r="1.3" fill="#d8c070"/><circle cx="9" cy="8" r="1.3" fill="#d8c070"/></svg></div>
<div class="bx" style="left:231.3px;top:490.2px;width:44.3px;height:14.3px;border-color:#242424;background:linear-gradient(#4e4e4e,#424242)"></div>
<div class="a" style="left:232.3px;top:491.2px;width:13.6px;height:12.3px;background:linear-gradient(#6a92d4,#5278bb)"></div>
<div class="a" style="left:245.9px;top:491.2px;width:1px;height:12.3px;background:#2a2a2a"></div>
<div class="a" style="left:260.7px;top:491.2px;width:1px;height:12.3px;background:#2a2a2a"></div>
<div class="a" style="left:233.5px;top:491.5px"><svg width="11" height="11"><path d="M5.5 0.8L10 3.2v5L5.5 10.5 1 8.2v-5z" fill="#e8a040" stroke="#5a3a10" stroke-width=".6"/><path d="M1 3.2l4.5 2.3L10 3.2M5.5 5.5v5" stroke="#f8d090" stroke-width=".6" fill="none"/></svg></div>
<div class="a" style="left:248px;top:491.8px"><svg width="11" height="11"><circle cx="5.5" cy="5.5" r="4.8" fill="#4a6a8a" stroke="#222" stroke-width=".6"/><path d="M2 4c2-1 3 1 5 0M3 7c1 1 3 1 4 2" stroke="#7a9a5a" stroke-width="1.3" fill="none"/></svg></div>
<div class="a" style="left:262.5px;top:492px"><svg width="11" height="11"><path d="M1 10L9 2" stroke="#5a7ab0" stroke-width="2.2"/><path d="M9 2l1-1" stroke="#ddd" stroke-width="1.6"/></svg></div>
<div class="bx" style="left:280px;top:490.2px;width:175.8px;height:14.3px;border-color:#2a2a2a;background:#999"></div>
<div class="a dk" style="left:281px;top:491.2px;width:22.6px;height:12.3px"></div>
<div class="a" style="left:283px;top:492px"><svg width="19" height="11"><circle cx="5.5" cy="5.5" r="4.8" fill="url(#ball)" stroke="#222" stroke-width=".6"/><path d="M13 4.5l2-3 2 3zM13 6.5l2 3 2-3z" fill="#aaa"/></svg></div>
<div class="a fld" style="left:303.6px;top:491.2px;width:89.7px;height:12.3px"></div>
<div class="t hx" style="left:309.3px;top:494px;font-size:8.2px;letter-spacing:-0.05px;color:#111">BarkWood Procedural</div>
<div class="a" style="left:393.3px;top:491.2px;width:18px;height:12.3px;background:linear-gradient(#a5a5a5,#939393);border-left:1px solid #555"></div>
<div class="t hx" style="left:400px;top:494px;color:#111">2</div>
<div class="a" style="left:411.2px;top:491.2px;width:15.3px;height:12.3px;background:linear-gradient(#a5a5a5,#939393);border-left:1px solid #555"></div>
<div class="t hx" style="left:416px;top:494px;color:#111">F</div>
<div class="a" style="left:426.5px;top:491.2px;width:1px;height:12.3px;background:#555"></div>
<div class="a" style="left:441.7px;top:491.2px;width:1px;height:12.3px;background:#555"></div>
<div class="a" style="left:429px;top:492px"><svg width="11" height="11"><path d="M5.5 1v9M1 5.5h9" stroke="#111" stroke-width="2.6"/><path d="M5.5 1.5v8M1.5 5.5h8" stroke="#f4f4f4" stroke-width="1.3"/></svg></div>
<div class="a" style="left:443.5px;top:492px"><svg width="11" height="11"><path d="M1.5 1.5l8 8M9.5 1.5l-8 8" stroke="#111" stroke-width="2.6"/><path d="M1.8 1.8l7.4 7.4M9.2 1.8l-7.4 7.4" stroke="#f4f4f4" stroke-width="1.2"/></svg></div>
<div class="bx" style="left:463px;top:491.8px;width:10.7px;height:10.7px;border-color:#2a2a2a;border-radius:2px;background:linear-gradient(#505050,#444)"></div>
<div class="a" style="left:464px;top:492px"><svg width="10" height="10"><path d="M1.5 5l2.5 2.5L9 1" stroke="#111" stroke-width="2.4" fill="none"/><path d="M1.5 5l2.5 2.5L9 1" stroke="#e8e8e8" stroke-width="1.3" fill="none"/></svg></div>
<div class="t hx" style="left:479.5px;top:494px;color:#ececec">Use Nodes</div>
<div class="bx tool" style="left:530px;top:490.2px;width:14.4px;height:14.3px;border-color:#2e2e2e"></div>
<div class="a" style="left:532px;top:492px"><svg width="11" height="11"><path d="M6 1l4 4-1.5.5-2 2 .3 1.7L6 10 1 5l.8-.8 1.7.3 2-2z" fill="#eee" stroke="#222" stroke-width=".6"/><path d="M3 8l-2.5 2.5" stroke="#eee" stroke-width="1"/></svg></div>
<div class="bx" style="left:548.9px;top:490.2px;width:14.2px;height:14.3px;border-color:#5a5a5a;background:#8a8a8a"></div>
<div class="a" style="left:551px;top:492px"><svg width="10" height="11"><path d="M5 1L1.5 4.5h2v5h5v-2H5.5v-3h2z" fill="none" stroke="#c8c8c8" stroke-width="1.1"/></svg></div>
<div class="bx" style="left:575.6px;top:490.2px;width:40.7px;height:14.3px;border-color:#2a2a2a;background:#3f3f3f"></div>
<div class="a" style="left:576.6px;top:491.2px;width:13.4px;height:12.3px;background:#8e8e8e"></div>
<div class="a" style="left:578.5px;top:492.5px"><svg width="10" height="10"><g transform="rotate(45 5 5)"><path d="M2.3 1v4.2a2.7 2.7 0 0 0 5.4 0V1" stroke="#2a2a2a" stroke-width="2.6" fill="none"/><path d="M2.3 1v4.2a2.7 2.7 0 0 0 5.4 0V1" stroke="#d0d0d0" stroke-width="1.4" fill="none"/></g></svg></div>
<div class="a" style="left:592px;top:491.5px"><svg width="23" height="12"><circle cx="3.5" cy="3" r="2.4" fill="#6aa0ff" stroke="#fff" stroke-width=".8"/><path d="M6.5 2v10M10.5 2v10M3 6.5h11M3 10h11" stroke="#eee" stroke-width=".8"/><path d="M17 4.5l2-3 2 3zM17 6.5l2 3 2-3z" fill="#aaa"/></svg></div>
<div class="bx tool" style="left:620.5px;top:490.2px;width:29px;height:14.3px;border-color:#2e2e2e"></div>
<div class="a" style="left:635px;top:491.2px;width:1px;height:12.3px;background:#4a4a4a"></div>
<div class="a" style="left:622.5px;top:491.5px"><svg width="12" height="12"><rect x="3" y="1.5" width="8" height="8" fill="#d9cfa8" stroke="#333" stroke-width=".6"/><path d="M1 11l4-4M1 11v-3M1 11h3" stroke="#fff" stroke-width="1"/></svg></div>
<div class="a" style="left:636.5px;top:491.5px"><svg width="12" height="12"><rect x="1" y="1.5" width="8" height="8" fill="#d9cfa8" stroke="#333" stroke-width=".6"/><path d="M11 11L7 7M11 11v-3M11 11H8" stroke="#fff" stroke-width="1"/></svg></div>
<div class="a" style="left:0;top:507px;width:824px;height:16.5px;background:#6c6c6c"></div>
<div class="a" style="left:0;top:507px;width:140.7px;height:16.5px;background:#474747"></div>
<div class="a" style="left:744.4px;top:507px;width:80px;height:16.5px;background:#474747"></div>
<div class="a" style="left:19.80px;top:507px;width:1px;height:16.5px;background:rgba(30,30,30,0.22)"></div>
<div class="a" style="left:43.90px;top:507px;width:1px;height:16.5px;background:rgba(30,30,30,0.45)"></div>
<div class="a" style="left:68.00px;top:507px;width:1px;height:16.5px;background:rgba(30,30,30,0.22)"></div>
<div class="a" style="left:92.10px;top:507px;width:1px;height:16.5px;background:rgba(30,30,30,0.45)"></div>
<div class="a" style="left:116.20px;top:507px;width:1px;height:16.5px;background:rgba(30,30,30,0.22)"></div>
<div class="a" style="left:140.30px;top:507px;width:1px;height:16.5px;background:rgba(30,30,30,0.45)"></div>
<div class="a" style="left:164.40px;top:507px;width:1px;height:16.5px;background:rgba(30,30,30,0.22)"></div>
<div class="a" style="left:188.50px;top:507px;width:1px;height:16.5px;background:rgba(30,30,30,0.45)"></div>
<div class="a" style="left:212.60px;top:507px;width:1px;height:16.5px;background:rgba(30,30,30,0.22)"></div>
<div class="a" style="left:236.70px;top:507px;width:1px;height:16.5px;background:rgba(30,30,30,0.45)"></div>
<div class="a" style="left:260.80px;top:507px;width:1px;height:16.5px;background:rgba(30,30,30,0.22)"></div>
<div class="a" style="left:284.90px;top:507px;width:1px;height:16.5px;background:rgba(30,30,30,0.45)"></div>
<div class="a" style="left:309.00px;top:507px;width:1px;height:16.5px;background:rgba(30,30,30,0.22)"></div>
<div class="a" style="left:333.10px;top:507px;width:1px;height:16.5px;background:rgba(30,30,30,0.45)"></div>
<div class="a" style="left:357.20px;top:507px;width:1px;height:16.5px;background:rgba(30,30,30,0.22)"></div>
<div class="a" style="left:381.30px;top:507px;width:1px;height:16.5px;background:rgba(30,30,30,0.45)"></div>
<div class="a" style="left:405.40px;top:507px;width:1px;height:16.5px;background:rgba(30,30,30,0.22)"></div>
<div class="a" style="left:429.50px;top:507px;width:1px;height:16.5px;background:rgba(30,30,30,0.45)"></div>
<div class="a" style="left:453.60px;top:507px;width:1px;height:16.5px;background:rgba(30,30,30,0.22)"></div>
<div class="a" style="left:477.70px;top:507px;width:1px;height:16.5px;background:rgba(30,30,30,0.45)"></div>
<div class="a" style="left:501.80px;top:507px;width:1px;height:16.5px;background:rgba(30,30,30,0.22)"></div>
<div class="a" style="left:525.90px;top:507px;width:1px;height:16.5px;background:rgba(30,30,30,0.45)"></div>
<div class="a" style="left:550.00px;top:507px;width:1px;height:16.5px;background:rgba(30,30,30,0.22)"></div>
<div class="a" style="left:574.10px;top:507px;width:1px;height:16.5px;background:rgba(30,30,30,0.45)"></div>
<div class="a" style="left:598.20px;top:507px;width:1px;height:16.5px;background:rgba(30,30,30,0.22)"></div>
<div class="a" style="left:622.30px;top:507px;width:1px;height:16.5px;background:rgba(30,30,30,0.45)"></div>
<div class="a" style="left:646.40px;top:507px;width:1px;height:16.5px;background:rgba(30,30,30,0.22)"></div>
<div class="a" style="left:670.50px;top:507px;width:1px;height:16.5px;background:rgba(30,30,30,0.45)"></div>
<div class="a" style="left:694.60px;top:507px;width:1px;height:16.5px;background:rgba(30,30,30,0.22)"></div>
<div class="a" style="left:718.70px;top:507px;width:1px;height:16.5px;background:rgba(30,30,30,0.45)"></div>
<div class="a" style="left:742.80px;top:507px;width:1px;height:16.5px;background:rgba(30,30,30,0.22)"></div>
<div class="a" style="left:766.90px;top:507px;width:1px;height:16.5px;background:rgba(30,30,30,0.45)"></div>
<div class="a" style="left:791.00px;top:507px;width:1px;height:16.5px;background:rgba(30,30,30,0.22)"></div>
<div class="a" style="left:815.10px;top:507px;width:1px;height:16.5px;background:rgba(30,30,30,0.45)"></div>
<div class="a" style="left:139.7px;top:507px;width:2px;height:16.5px;background:#5ec03a"></div>
<div class="a" style="left:0;top:523.5px;width:824px;height:13px;background:#727272"></div>
<div class="a" style="left:2px;top:524.7px;width:819px;height:8.8px;border-radius:4.4px;background:linear-gradient(#b0b0b0,#9a9a9a);box-shadow:0 0 0 .6px #3a3a3a"></div>
<div class="a" style="left:3px;top:525.5px;width:7px;height:7px;border-radius:50%;background:#8a8a8a"></div>
<div class="t" style="left:23.18px;top:525.6px;width:40px;text-align:center;font-size:8.8px;color:#111">-40</div>
<div class="t" style="left:71.14px;top:525.6px;width:40px;text-align:center;font-size:8.8px;color:#111">-20</div>
<div class="t" style="left:120.60px;top:525.6px;width:40px;text-align:center;font-size:8.8px;color:#111">0</div>
<div class="t" style="left:168.56px;top:525.6px;width:40px;text-align:center;font-size:8.8px;color:#111">20</div>
<div class="t" style="left:216.52px;top:525.6px;width:40px;text-align:center;font-size:8.8px;color:#111">40</div>
<div class="t" style="left:264.48px;top:525.6px;width:40px;text-align:center;font-size:8.8px;color:#111">60</div>
<div class="t" style="left:312.44px;top:525.6px;width:40px;text-align:center;font-size:8.8px;color:#111">80</div>
<div class="t" style="left:360.40px;top:525.6px;width:40px;text-align:center;font-size:8.8px;color:#111">100</div>
<div class="t" style="left:408.36px;top:525.6px;width:40px;text-align:center;font-size:8.8px;color:#111">120</div>
<div class="t" style="left:456.32px;top:525.6px;width:40px;text-align:center;font-size:8.8px;color:#111">140</div>
<div class="t" style="left:504.28px;top:525.6px;width:40px;text-align:center;font-size:8.8px;color:#111">160</div>
<div class="t" style="left:552.24px;top:525.6px;width:40px;text-align:center;font-size:8.8px;color:#111">180</div>
<div class="t" style="left:600.20px;top:525.6px;width:40px;text-align:center;font-size:8.8px;color:#111">200</div>
<div class="t" style="left:648.16px;top:525.6px;width:40px;text-align:center;font-size:8.8px;color:#111">220</div>
<div class="t" style="left:696.12px;top:525.6px;width:40px;text-align:center;font-size:8.8px;color:#111">240</div>
<div class="t" style="left:744.08px;top:525.6px;width:40px;text-align:center;font-size:8.8px;color:#111">260</div>
<div class="t" style="left:792.04px;top:525.6px;width:40px;text-align:center;font-size:8.8px;color:#111">280</div>
<div class="a" style="left:814px;top:507px"><svg width="10" height="10"><path d="M1 0l9 9M4 0l6 6M7 0l3 3" stroke="#2a2a2a" stroke-width="1"/><path d="M2 0l8 8M5 0l5 5M8 0l2 2" stroke="#b0b0b0" stroke-width=".6"/></svg></div>
<div class="a" style="left:0;top:536.2px;width:824px;height:1px;background:#3a3a3a"></div>
<div class="bx dk" style="left:-8px;top:539.7px;width:21px;height:13px;border-color:#262626"></div>
<div class="a" style="left:0px;top:541px"><svg width="12" height="11"><circle cx="0.5" cy="5.5" r="4.5" fill="#eee" stroke="#222" stroke-width=".5"/><path d="M-2 3l5 5M3 3l-5 5" stroke="#c03030" stroke-width="1"/><path d="M7 4.5l2-3 2 3zM7 6.5l2 3 2-3z" fill="#aaa"/></svg></div>
<div class="t hx" style="left:23.2px;top:543.5px">View</div>
<div class="t hx" style="left:56.3px;top:543.5px">Marker</div>
<div class="t hx" style="left:97.7px;top:543.5px">Frame</div>
<div class="t hx" style="left:136.4px;top:543.5px">Playback</div>
<div class="bx tool" style="left:180.6px;top:539.7px;width:28.4px;height:13.7px;border-color:#2e2e2e"></div>
<div class="a" style="left:194.8px;top:540.7px;width:1px;height:11.7px;background:#4a4a4a"></div>
<div class="a" style="left:182.5px;top:541px"><svg width="11" height="11"><circle cx="5.5" cy="5.5" r="4.8" fill="#f0f0f0" stroke="#222" stroke-width=".6"/><path d="M5.5 5.5V1A4.5 4.5 0 0 1 10 5.5z" fill="#f0a020"/><path d="M5.5 5.5H10" stroke="#222" stroke-width=".6"/></svg></div>
<div class="a" style="left:197px;top:540.5px"><svg width="10" height="12"><path d="M2.5 6V4a2.5 2.5 0 0 1 5 0v2" stroke="#eee" stroke-width="1.2" fill="none"/><rect x="1" y="6" width="8" height="5.5" fill="#f0f0f0" stroke="#222" stroke-width=".6"/></svg></div>
<div class="bx nrow" style="left:214.5px;top:539.5px;width:87px;height:13.8px;border-radius:7px 0 0 7px"></div>
<div class="bx nrow" style="left:301.2px;top:539.5px;width:83.2px;height:13.8px;border-radius:0 7px 7px 0"></div>
<div class="a" style="left:218.5px;top:544px"><svg width="4" height="5"><path d="M3.5 0L0.5 2.5 3.5 5z" fill="#8a8a8a"/></svg></div>
<div class="a" style="left:295px;top:544px"><svg width="4" height="5"><path d="M0.5 0L3.5 2.5 0.5 5z" fill="#8a8a8a"/></svg></div>
<div class="a" style="left:306px;top:544px"><svg width="4" height="5"><path d="M3.5 0L0.5 2.5 3.5 5z" fill="#8a8a8a"/></svg></div>
<div class="a" style="left:377.5px;top:544px"><svg width="4" height="5"><path d="M0.5 0L3.5 2.5 0.5 5z" fill="#8a8a8a"/></svg></div>
<div class="t hx" style="left:226px;top:543.5px;color:#111">Start:</div>
<div class="t hx" style="left:250px;top:543.5px;width:39px;text-align:right;color:#111">1</div>
<div class="t hx" style="left:312.8px;top:543.5px;color:#111">End:</div>
<div class="t hx" style="left:332px;top:543.5px;width:40.5px;text-align:right;color:#111">250</div>
<div class="bx nrow" style="left:388.9px;top:539.5px;width:66.8px;height:13.8px;border-radius:7px"></div>
<div class="a" style="left:393px;top:544px"><svg width="4" height="5"><path d="M3.5 0L0.5 2.5 3.5 5z" fill="#8a8a8a"/></svg></div>
<div class="a" style="left:449px;top:544px"><svg width="4" height="5"><path d="M0.5 0L3.5 2.5 0.5 5z" fill="#8a8a8a"/></svg></div>
<div class="t hx" style="left:400px;top:543.5px;width:41.5px;text-align:right;color:#111">1</div>
<div class="bx tool" style="left:468.4px;top:539.4px;width:88.9px;height:13.8px;border-color:#2e2e2e"></div>
<div class="a" style="left:470.40px;top:541px"><svg width="11" height="11"><g stroke-linejoin="round"><path d="M1.5 1.5v8" stroke="#222" stroke-width="2.4"/><path d="M6 1.5L2.5 5.5 6 9.5zM10 1.5L6.5 5.5 10 9.5z" fill="none" stroke="#222" stroke-width="2.2"/><path d="M1.5 1.5v8" stroke="#fff" stroke-width="1.3"/><path d="M6 1.5L2.5 5.5 6 9.5zM10 1.5L6.5 5.5 10 9.5z" fill="none" stroke="#fff" stroke-width="1"/></g></svg></div>
<div class="a" style="left:483.22px;top:540.4px;width:1px;height:11.8px;background:#4a4a4a"></div>
<div class="a" style="left:485.22px;top:541px"><svg width="11" height="11"><g stroke-linejoin="round"><path d="M5.5 1.5L1.5 5.5 5.5 9.5zM10 1.5L6 5.5 10 9.5z" fill="none" stroke="#222" stroke-width="2.2"/><path d="M5.5 1.5L1.5 5.5 5.5 9.5zM10 1.5L6 5.5 10 9.5z" fill="none" stroke="#fff" stroke-width="1"/></g></svg></div>
<div class="a" style="left:498.04px;top:540.4px;width:1px;height:11.8px;background:#4a4a4a"></div>
<div class="a" style="left:500.04px;top:541px"><svg width="11" height="11"><g stroke-linejoin="round"><path d="M9.5 0.5L1.5 5.5 9.5 10.5z" fill="none" stroke="#222" stroke-width="2.3"/><path d="M9.5 0.5L1.5 5.5 9.5 10.5z" fill="none" stroke="#fff" stroke-width="1.1"/></g></svg></div>
<div class="a" style="left:512.86px;top:540.4px;width:1px;height:11.8px;background:#4a4a4a"></div>
<div class="a" style="left:514.86px;top:541px"><svg width="11" height="11"><g stroke-linejoin="round"><path d="M1.5 0.5L9.5 5.5 1.5 10.5z" fill="none" stroke="#222" stroke-width="2.3"/><path d="M1.5 0.5L9.5 5.5 1.5 10.5z" fill="none" stroke="#fff" stroke-width="1.1"/></g></svg></div>
<div class="a" style="left:527.68px;top:540.4px;width:1px;height:11.8px;background:#4a4a4a"></div>
<div class="a" style="left:529.68px;top:541px"><svg width="11" height="11"><g stroke-linejoin="round"><path d="M1 1.5L5 5.5 1 9.5zM5.5 1.5L9.5 5.5 5.5 9.5z" fill="none" stroke="#222" stroke-width="2.2"/><path d="M1 1.5L5 5.5 1 9.5zM5.5 1.5L9.5 5.5 5.5 9.5z" fill="none" stroke="#fff" stroke-width="1"/></g></svg></div>
<div class="a" style="left:542.50px;top:540.4px;width:1px;height:11.8px;background:#4a4a4a"></div>
<div class="a" style="left:544.50px;top:541px"><svg width="11" height="11"><g stroke-linejoin="round"><path d="M9.5 1.5v8" stroke="#222" stroke-width="2.4"/><path d="M1 1.5L4.5 5.5 1 9.5zM5 1.5L8.5 5.5 5 9.5z" fill="none" stroke="#222" stroke-width="2.2"/><path d="M9.5 1.5v8" stroke="#fff" stroke-width="1.3"/><path d="M1 1.5L4.5 5.5 1 9.5zM5 1.5L8.5 5.5 5 9.5z" fill="none" stroke="#fff" stroke-width="1"/></g></svg></div>
<div class="bx dk" style="left:562.7px;top:539.4px;width:84.8px;height:13.8px;border-color:#262626;border-radius:4px"></div>
<div class="t hx" style="left:569px;top:543.5px;color:#f2f2f2">No Sync</div>
<div class="a" style="left:640px;top:541px"><svg width="6" height="11"><path d="M0.5 4.5l2.5-3.5 2.5 3.5zM0.5 6.5l2.5 3.5 2.5-3.5z" fill="#bbb"/></svg></div>
<div class="bx tool" style="left:660.4px;top:539.3px;width:14px;height:13.9px;border-color:#2e2e2e"></div>
<div class="a" style="left:664.2px;top:543px;width:6.6px;height:6.6px;border-radius:50%;background:radial-gradient(circle at 50% 40%,#ff5a2a,#d83010);box-shadow:0 0 0 .7px #7a2a1a"></div>
<div class="bx" style="left:679.9px;top:539.3px;width:126.1px;height:13.9px;border-color:#2e2e2e;background:#999"></div>
<div class="a fld" style="left:680.9px;top:540.3px;width:95.5px;height:11.9px"></div>
<div class="a" style="left:682px;top:540.5px"><svg width="14" height="12"><path d="M2.5 1v9.5M2.5 10.5h3M2.5 6h2.5" stroke="#3a3a2a" stroke-width="2.2"/><path d="M2.5 1v9.5M2.5 10.5h3M2.5 6h2.5" stroke="#e0dc9a" stroke-width="1.2"/><path d="M6 9l6-5" stroke="#333" stroke-width="2.4"/><path d="M6 9l6-5" stroke="#f0f0f0" stroke-width="1.3"/><circle cx="12" cy="3.5" r="1.6" fill="#f0f0f0" stroke="#333" stroke-width=".5"/></svg></div>
<div class="a" style="left:776.4px;top:540.3px;width:1px;height:11.9px;background:#555"></div>
<div class="a" style="left:791.5px;top:540.3px;width:1px;height:11.9px;background:#555"></div>
<div class="a" style="left:778.5px;top:541px"><svg width="11" height="11"><path d="M2 9l6.5-6.5" stroke="#333" stroke-width="2.6"/><path d="M2 9l6.5-6.5" stroke="#f0f0f0" stroke-width="1.4"/><circle cx="8.5" cy="2.5" r="1.8" fill="#f0f0f0" stroke="#333" stroke-width=".5"/><circle cx="2" cy="9" r="1.8" fill="#f0f0f0" stroke="#333" stroke-width=".5"/></svg></div>
<div class="a" style="left:793.5px;top:541px"><svg width="11" height="11"><path d="M2 9l6.5-6.5" stroke="#333" stroke-width="2.6"/><path d="M2 9l6.5-6.5" stroke="#f0f0f0" stroke-width="1.4"/><circle cx="8.5" cy="2.5" r="1.8" fill="#f0f0f0" stroke="#333" stroke-width=".5"/><circle cx="2" cy="9" r="1.8" fill="#f0f0f0" stroke="#333" stroke-width=".5"/><path d="M1 1l9 9M10 1L1 10" stroke="#d03030" stroke-width="1.3" opacity=".85"/></svg></div>
<!--/BOTTOM-->
<!--RIGHT-->
<div class="a" style="left:825px;top:37px;width:199px;height:86px;background:#727272"></div>
<div class="a" style="left:825px;top:56px;width:199px;height:9px;background:#767676"></div>
<div class="a" style="left:825px;top:65px;width:199px;height:15.3px;background:#7b7b7b"></div>
<div class="a" style="left:825px;top:80.3px;width:199px;height:15.3px;background:#747474"></div>
<div class="a" style="left:825px;top:95.6px;width:199px;height:15px;background:#7b7b7b"></div>
<div class="a" style="left:825px;top:110.6px;width:199px;height:12.4px;background:#747474"></div>
<div class="a" style="left:825px;top:37px;width:199px;height:19px;background:#727272;border-bottom:1px solid #5e5e5e"></div>
<div class="bx dk" style="left:832.3px;top:40px;width:21.5px;height:14.5px;border-color:#262626"></div>
<div class="a" style="left:835px;top:41.5px"><svg width="17" height="12"><path d="M2 1h4M2.5 1v9M2.5 5.5h3M2.5 9.5h3" stroke="#e8d890" stroke-width="1" fill="none"/><path d="M2.5 3v7M2.5 5.5h3M2.5 9.5h3" stroke="#ddd" stroke-width=".8" fill="none"/><rect x="5.5" y="4.3" width="4.5" height="2.4" fill="#f0f0f0"/><rect x="5.5" y="8.3" width="4.5" height="2.4" fill="#f0f0f0"/><path d="M12 4.5l2-3 2 3zM12 6.5l2 3 2-3z" fill="#aaa"/></svg></div>
<div class="t hx" style="left:864.2px;top:44px">View</div>
<div class="t hx" style="left:897.7px;top:44px">Search</div>
<div class="bx dk" style="left:932.3px;top:40.2px;width:89.2px;height:14px;border-color:#262626;border-radius:4px"></div>
<div class="t hx" style="left:938px;top:44px;color:#f2f2f2">All Scenes</div>
<div class="a" style="left:1014px;top:42px"><svg width="6" height="11"><path d="M0.5 4.5l2.5-3.5 2.5 3.5zM0.5 6.5l2.5 3.5 2.5-3.5z" fill="#bbb"/></svg></div>
<div class="a" style="left:845px;top:57px;width:1px;height:53px;background:#4a4a4a"></div>
<div class="a" style="left:965.8px;top:57px;width:1px;height:53.5px;background:#686868"></div>
<div class="a" style="left:980.8px;top:57px;width:1px;height:53.5px;background:#686868"></div>
<div class="a" style="left:995.8px;top:57px;width:1px;height:53.5px;background:#686868"></div>
<div class="a" style="left:968.8px;top:55.0px"><svg width="11" height="7"><path d="M0.6 3.5Q5.5 -1.8 10.4 3.5Q5.5 8.8 0.6 3.5z" fill="#f0f0f0" stroke="#2a2a2a" stroke-width=".9"/><circle cx="5.5" cy="3.5" r="1.5" fill="#2a2a2a"/></svg></div>
<div class="a" style="left:986.5px;top:54.0px"><svg width="7" height="10"><path d="M1 0.5v7.5l2-1.8 1.6 3.4 1.2-.6-1.6-3.2h2.5z" fill="#f4f4f4" stroke="#222" stroke-width=".7"/></svg></div>
<div class="a" style="left:999.3px;top:54.0px"><svg width="10" height="9"><rect x="0.5" y="1.5" width="9" height="7" fill="#333" stroke="#222" stroke-width=".5"/><rect x="1.5" y="2.5" width="7" height="5" fill="none" stroke="#eee" stroke-width=".7"/><circle cx="5" cy="5" r="1.5" fill="none" stroke="#eee" stroke-width=".7"/><rect x="2" y="0" width="2.5" height="1.5" fill="#333"/></svg></div>
<div class="a" style="left:849px;top:72.6px;width:8px;height:1px;background:#4a4a4a"></div>
<div class="a" style="left:843.1px;top:69.69999999999999px;width:6.8px;height:6.8px;border-radius:50%;background:#f2f2f2;border:1px solid #333"></div>
<div class="a" style="left:845.9px;top:71.19999999999999px;width:1.2px;height:3.8px;background:#333"></div>
<div class="a" style="left:968.8px;top:69.6px"><svg width="11" height="7"><path d="M0.6 3.5Q5.5 -1.8 10.4 3.5Q5.5 8.8 0.6 3.5z" fill="#f0f0f0" stroke="#2a2a2a" stroke-width=".9"/><circle cx="5.5" cy="3.5" r="1.5" fill="#2a2a2a"/></svg></div>
<div class="a" style="left:986.5px;top:68.6px"><svg width="7" height="10"><path d="M1 0.5v7.5l2-1.8 1.6 3.4 1.2-.6-1.6-3.2h2.5z" fill="#f4f4f4" stroke="#222" stroke-width=".7"/></svg></div>
<div class="a" style="left:999.3px;top:68.6px"><svg width="10" height="9"><rect x="0.5" y="1.5" width="9" height="7" fill="#333" stroke="#222" stroke-width=".5"/><rect x="1.5" y="2.5" width="7" height="5" fill="none" stroke="#eee" stroke-width=".7"/><circle cx="5" cy="5" r="1.5" fill="none" stroke="#eee" stroke-width=".7"/><rect x="2" y="0" width="2.5" height="1.5" fill="#333"/></svg></div>
<div class="a" style="left:849px;top:87.5px;width:8px;height:1px;background:#4a4a4a"></div>
<div class="a" style="left:843.1px;top:84.6px;width:6.8px;height:6.8px;border-radius:50%;background:#f2f2f2;border:1px solid #333"></div>
<div class="a" style="left:845.9px;top:86.1px;width:1.2px;height:3.8px;background:#333"></div>
<div class="a" style="left:968.8px;top:84.5px"><svg width="11" height="7"><path d="M0.6 3.5Q5.5 -1.8 10.4 3.5Q5.5 8.8 0.6 3.5z" fill="#f0f0f0" stroke="#2a2a2a" stroke-width=".9"/><circle cx="5.5" cy="3.5" r="1.5" fill="#2a2a2a"/></svg></div>
<div class="a" style="left:986.5px;top:83.5px"><svg width="7" height="10"><path d="M1 0.5v7.5l2-1.8 1.6 3.4 1.2-.6-1.6-3.2h2.5z" fill="#f4f4f4" stroke="#222" stroke-width=".7"/></svg></div>
<div class="a" style="left:999.3px;top:83.5px"><svg width="10" height="9"><rect x="0.5" y="1.5" width="9" height="7" fill="#333" stroke="#222" stroke-width=".5"/><rect x="1.5" y="2.5" width="7" height="5" fill="none" stroke="#eee" stroke-width=".7"/><circle cx="5" cy="5" r="1.5" fill="none" stroke="#eee" stroke-width=".7"/><rect x="2" y="0" width="2.5" height="1.5" fill="#333"/></svg></div>
<div class="a" style="left:849px;top:102.4px;width:8px;height:1px;background:#4a4a4a"></div>
<div class="a" style="left:843.1px;top:99.5px;width:6.8px;height:6.8px;border-radius:50%;background:#f2f2f2;border:1px solid #333"></div>
<div class="a" style="left:845.9px;top:101.0px;width:1.2px;height:3.8px;background:#333"></div>
<div class="a" style="left:968.8px;top:99.4px"><svg width="11" height="7"><path d="M0.6 3.5Q5.5 -1.8 10.4 3.5Q5.5 8.8 0.6 3.5z" fill="#f0f0f0" stroke="#2a2a2a" stroke-width=".9"/><circle cx="5.5" cy="3.5" r="1.5" fill="#2a2a2a"/></svg></div>
<div class="a" style="left:986.5px;top:98.4px"><svg width="7" height="10"><path d="M1 0.5v7.5l2-1.8 1.6 3.4 1.2-.6-1.6-3.2h2.5z" fill="#f4f4f4" stroke="#222" stroke-width=".7"/></svg></div>
<div class="a" style="left:999.3px;top:98.4px"><svg width="10" height="9"><rect x="0.5" y="1.5" width="9" height="7" fill="#333" stroke="#222" stroke-width=".5"/><rect x="1.5" y="2.5" width="7" height="5" fill="none" stroke="#eee" stroke-width=".7"/><circle cx="5" cy="5" r="1.5" fill="none" stroke="#eee" stroke-width=".7"/><rect x="2" y="0" width="2.5" height="1.5" fill="#333"/></svg></div>
<div class="a" style="left:857.2px;top:56px"><svg width="11" height="9"><path d="M5.5 0.5v4M5.5 4.5L1 8M5.5 4.5L10 8" stroke="#5a3a10" stroke-width="2.6" fill="none"/><path d="M5.5 0.5v4M5.5 4.5L1 8M5.5 4.5L10 8" stroke="#f0a850" stroke-width="1.4" fill="none"/></svg></div>
<div class="t ot" style="left:871.3px;top:55px">Empty</div>
<div class="a" style="left:857.2px;top:67px"><svg width="11" height="12"><path d="M1 1h9L5.5 11z" fill="none" stroke="#5a3a10" stroke-width="2.6" stroke-linejoin="round"/><path d="M1 1h9L5.5 11z" fill="none" stroke="#f0a850" stroke-width="1.3" stroke-linejoin="round"/><path d="M2.5 2.5L5.5 9 8.5 2.5" stroke="#fff" stroke-width=".6" fill="none"/></svg></div>
<div class="t ot" style="left:871.3px;top:70px">Plane</div>
<div class="a" style="left:899.3px;top:69px;width:1px;height:8px;background:#333"></div>
<div class="a" style="left:907.8px;top:68px"><svg width="11" height="10"><path d="M1.5 1.5L5.5 8.5 9.5 1.5" stroke="#a8a8a8" stroke-width=".6" fill="none"/><circle cx="1.5" cy="1.5" r="1.2" fill="#ddd" stroke="#444" stroke-width=".4"/><circle cx="9.5" cy="1.5" r="1.2" fill="#ddd" stroke="#444" stroke-width=".4"/><circle cx="5.5" cy="8.5" r="1.2" fill="#ddd" stroke="#444" stroke-width=".4"/></svg></div>
<div class="a" style="left:856.5px;top:82px;width:12px;height:12px;border-radius:50%;background:radial-gradient(circle,#d49a60,#b07840 70%,rgba(150,100,50,.6))"></div>
<div class="a" style="left:857.2px;top:82px"><svg width="11" height="12"><path d="M1 1h9L5.5 11z" fill="none" stroke="#5a3a10" stroke-width="2.6" stroke-linejoin="round"/><path d="M1 1h9L5.5 11z" fill="none" stroke="#f0a850" stroke-width="1.3" stroke-linejoin="round"/><path d="M2.5 2.5L5.5 9 8.5 2.5" stroke="#fff" stroke-width=".6" fill="none"/></svg></div>
<div class="t ot" style="left:871.3px;top:85px;color:#f4f4f4">Sphere</div>
<div class="a" style="left:904.5px;top:84px;width:1px;height:8px;background:#333"></div>
<div class="a" style="left:912.5px;top:83px"><svg width="11" height="10"><path d="M1.5 1.5L5.5 8.5 9.5 1.5" stroke="#a8a8a8" stroke-width=".6" fill="none"/><circle cx="1.5" cy="1.5" r="1.2" fill="#ddd" stroke="#444" stroke-width=".4"/><circle cx="9.5" cy="1.5" r="1.2" fill="#ddd" stroke="#444" stroke-width=".4"/><circle cx="5.5" cy="8.5" r="1.2" fill="#ddd" stroke="#444" stroke-width=".4"/></svg></div>
<div class="a" style="left:928.3px;top:82.5px"><svg width="11" height="11"><path d="M1.5 9.5L6.5 4.5" stroke="#1e2a44" stroke-width="3.4" stroke-linecap="round"/><path d="M1.5 9.5L6.5 4.5" stroke="#8aaee8" stroke-width="2" stroke-linecap="round"/><path d="M6 5.5a3 3 0 1 1 4.3-3.5L8.5 2.8 7.8 1.4 9.2 0.4A3 3 0 0 0 6 5.5z" fill="#8aaee8" stroke="#1e2a44" stroke-width=".7"/></svg></div>
<div class="a" style="left:859.5px;top:97px"><svg width="8" height="12"><path d="M1.5 1h5.5M3 1v10M1.5 11h3.5M3 5.5h3" stroke="#5a3a10" stroke-width="2.6" fill="none"/><path d="M1.5 1h5.5M3 1v10M1.5 11h3.5M3 5.5h3" stroke="#f0a850" stroke-width="1.4" fill="none"/></svg></div>
<div class="t ot" style="left:871.3px;top:99.8px">Text</div>
<div class="a" style="left:894.5px;top:99px;width:1px;height:8px;background:#333"></div>
<div class="a" style="left:904.3px;top:97.5px"><svg width="9" height="11"><path d="M2.5 1.5Q8 2 7.5 6 7 9.5 1.5 9.5" stroke="#bbb" stroke-width=".6" fill="none"/><circle cx="2.5" cy="1.5" r="1.2" fill="#ddd" stroke="#444" stroke-width=".4"/><circle cx="1.5" cy="9.5" r="1.2" fill="#ddd" stroke="#444" stroke-width=".4"/></svg></div>
<div class="a" style="left:917.8px;top:97.5px"><svg width="11" height="11"><path d="M1.5 9.5L6.5 4.5" stroke="#1e2a44" stroke-width="3.4" stroke-linecap="round"/><path d="M1.5 9.5L6.5 4.5" stroke="#8aaee8" stroke-width="2" stroke-linecap="round"/><path d="M6 5.5a3 3 0 1 1 4.3-3.5L8.5 2.8 7.8 1.4 9.2 0.4A3 3 0 0 0 6 5.5z" fill="#8aaee8" stroke="#1e2a44" stroke-width=".7"/></svg></div>
<div class="a" style="left:825px;top:37px;width:199px;height:19px;background:#727272;border-bottom:1px solid #5e5e5e"></div>
<div class="bx dk" style="left:832.3px;top:40px;width:21.5px;height:14.5px;border-color:#262626"></div>
<div class="a" style="left:835px;top:41.5px"><svg width="17" height="12"><path d="M1.5 1h4" stroke="#e8d890" stroke-width="1.2"/><path d="M2.5 1v9M2.5 5.5h3M2.5 9.5h3" stroke="#ddd" stroke-width=".8" fill="none"/><rect x="5.5" y="4.3" width="4.5" height="2.4" fill="#f0f0f0"/><rect x="5.5" y="8.3" width="4.5" height="2.4" fill="#f0f0f0"/><path d="M12 4.5l2-3 2 3zM12 6.5l2 3 2-3z" fill="#aaa"/></svg></div>
<div class="t hx" style="left:864.2px;top:44px">View</div>
<div class="t hx" style="left:897.7px;top:44px">Search</div>
<div class="bx dk" style="left:932.3px;top:40.2px;width:89.2px;height:14px;border-color:#262626;border-radius:4px"></div>
<div class="t hx" style="left:938px;top:44px;color:#f2f2f2">All Scenes</div>
<div class="a" style="left:1014px;top:42px"><svg width="6" height="11"><path d="M0.5 4.5l2.5-3.5 2.5 3.5zM0.5 6.5l2.5 3.5 2.5-3.5z" fill="#bbb"/></svg></div>
<div class="a" style="left:1016px;top:37px"><svg width="8" height="8"><path d="M1 0l7 7M3.5 0l4.5 4.5M6 0l2 2" stroke="#333" stroke-width=".9"/><path d="M2 0l6 6M4.5 0l3.5 3.5" stroke="#aaa" stroke-width=".5"/></svg></div>
<div class="a" style="left:1011.9px;top:61px;width:8.8px;height:44.7px;border-radius:4.4px;background:#686868"></div>
<div class="a" style="left:1012.4px;top:78.6px;width:7.8px;height:12px;border-radius:3.9px;background:#9c9c9c"></div>
<div class="a" style="left:828px;top:110.7px;width:178.8px;height:8.9px;border-radius:4.45px;background:#686868"></div>
<div class="a" style="left:828px;top:110.7px;width:146.7px;height:8.9px;border-radius:4.45px;background:linear-gradient(#9a9a9a,#8a8a8a);box-shadow:0 0 0 .6px #555"></div>
<div class="a" style="left:825px;top:115px"><svg width="9" height="8"><path d="M0 1l7 7M0 4l4 4M0 7l1 1" stroke="#333" stroke-width=".9"/><path d="M0 2l6 6M0 5l3 3" stroke="#aaa" stroke-width=".5"/></svg></div>
<div class="a" style="left:825px;top:122px;width:199px;height:1.5px;background:#2a2a2a"></div>
<div class="a" style="left:825px;top:123.5px;width:199px;height:431.5px;background:#727272"></div>
<div class="a" style="left:825px;top:141.5px;width:199px;height:1px;background:#666"></div>
<div class="bx dk" style="left:832px;top:126px;width:22px;height:14.5px;border-color:#262626"></div>
<div class="a" style="left:835px;top:128px"><svg width="17" height="11"><rect x="0.5" y="1" width="8.5" height="3.5" rx="1" fill="none" stroke="#ddd" stroke-width=".8"/><rect x="5.5" y="1.3" width="3" height="3" fill="#eee"/><rect x="0.5" y="6" width="8.5" height="3.8" rx="1" fill="#eee" stroke="#222" stroke-width=".5"/><path d="M12 4.5l2-3 2 3zM12 6.5l2 3 2-3z" fill="#aaa"/></svg></div>
<div class="bx" style="left:861px;top:126.5px;width:170px;height:13.5px;border-color:#282828;background:#454545"></div>
<div class="a" style="left:905.3px;top:127.5px;width:14.8px;height:11.5px;background:linear-gradient(#6a92d4,#5278bb)"></div>
<div class="a" style="left:875.82px;top:127.5px;width:1px;height:11.5px;background:#2e2e2e"></div>
<div class="a" style="left:890.64px;top:127.5px;width:1px;height:11.5px;background:#2e2e2e"></div>
<div class="a" style="left:905.46px;top:127.5px;width:1px;height:11.5px;background:#2e2e2e"></div>
<div class="a" style="left:920.28px;top:127.5px;width:1px;height:11.5px;background:#2e2e2e"></div>
<div class="a" style="left:935.10px;top:127.5px;width:1px;height:11.5px;background:#2e2e2e"></div>
<div class="a" style="left:949.92px;top:127.5px;width:1px;height:11.5px;background:#2e2e2e"></div>
<div class="a" style="left:964.74px;top:127.5px;width:1px;height:11.5px;background:#2e2e2e"></div>
<div class="a" style="left:979.56px;top:127.5px;width:1px;height:11.5px;background:#2e2e2e"></div>
<div class="a" style="left:994.38px;top:127.5px;width:1px;height:11.5px;background:#2e2e2e"></div>
<div class="a" style="left:1009.20px;top:127.5px;width:1px;height:11.5px;background:#2e2e2e"></div>
<div class="a" style="left:863.00px;top:128px"><svg width="11" height="11"><rect x="1" y="2.5" width="9" height="6.5" fill="#555" stroke="#ddd" stroke-width=".7"/><rect x="1" y="1" width="9" height="1.5" fill="#ddd"/><circle cx="5.5" cy="6" r="2" fill="none" stroke="#eee" stroke-width=".7"/></svg></div>
<div class="a" style="left:877.82px;top:128px"><svg width="11" height="11"><rect x="3" y="3" width="7" height="7.5" fill="#b8c0d0" stroke="#333" stroke-width=".5"/><rect x="1" y="1" width="7" height="7.5" fill="#dde2ea" stroke="#333" stroke-width=".5"/><path d="M4.5 2v4" stroke="#4a70b0" stroke-width="1.3"/></svg></div>
<div class="a" style="left:892.64px;top:128px"><svg width="11" height="11"><circle cx="3" cy="2.5" r="2" fill="#c8d86a" opacity=".8"/><rect x="6" y="1" width="4" height="7" rx="2" fill="#5a86d0"/><circle cx="4" cy="8" r="2.6" fill="#eee"/></svg></div>
<div class="a" style="left:907.46px;top:128px"><svg width="11" height="11"><circle cx="5.5" cy="5.5" r="5" fill="#3a78a8" stroke="#e8f0f8" stroke-width=".8"/><path d="M2 4c1.5-2 3 0 4-1.5M3.5 8c1-1 2.5 0 4-1" stroke="#6aa050" stroke-width="1.6" fill="none"/></svg></div>
<div class="a" style="left:922.28px;top:128px"><svg width="11" height="11"><path d="M5.5 0.8L10 3.2v5L5.5 10.5 1 8.2v-5z" fill="#c89050" stroke="#4a3010" stroke-width=".5"/><path d="M1 3.2l4.5 2.3L10 3.2M5.5 5.5v5" stroke="#f0c080" stroke-width=".5" fill="none"/></svg></div>
<div class="a" style="left:937.10px;top:128px"><svg width="11" height="11"><path d="M4 6.5a2 2 0 0 1 0-3l1.5-1.5a2 2 0 0 1 3 3M7 4.5a2 2 0 0 1 0 3L5.5 9a2 2 0 0 1-3-3" stroke="#c8c8c8" stroke-width="1" fill="none"/></svg></div>
<div class="a" style="left:951.92px;top:128px"><svg width="11" height="11"><path d="M1.5 9.5L6.5 4.5" stroke="#8aaee8" stroke-width="1.8"/><path d="M6 5.5a3 3 0 1 1 4.3-3.5L8.5 2.8 7.8 1.4 9.2 .4A3 3 0 0 0 6 5.5z" fill="#8aaee8"/></svg></div>
<div class="a" style="left:966.74px;top:128px"><svg width="11" height="11"><path d="M1.5 1.5L5.5 9 9.5 1.5" stroke="#ccc" stroke-width=".7" fill="none"/><circle cx="1.5" cy="1.5" r="1" fill="#eee"/><circle cx="9.5" cy="1.5" r="1" fill="#eee"/><circle cx="5.5" cy="9" r="1" fill="#eee"/></svg></div>
<div class="a" style="left:981.56px;top:128px"><svg width="11" height="11"><circle cx="5.5" cy="5.5" r="4.8" fill="#7a6a6a" stroke="#222" stroke-width=".5"/><circle cx="4.3" cy="4" r="1.6" fill="#c8b8b8"/></svg></div>
<div class="a" style="left:996.38px;top:128px"><svg width="11" height="11"><rect x="0.5" y="0.5" width="10" height="10" fill="#f0d8d8"/><path d="M0.5 .5h2.5v2.5H.5zM5.5 .5H8v2.5H5.5zM3 3h2.5v2.5H3zM8 3h2.5v2.5H8zM.5 5.5H3V8H.5zM5.5 5.5H8V8H5.5zM3 8h2.5v2.5H3zM8 8h2.5v2.5H8z" fill="#a03838"/></svg></div>
<div class="a" style="left:1011.20px;top:128px"><svg width="11" height="11"><path d="M5 1v9M0.5 5.5h9M2 2.5l6 6M8 2.5l-6 6" stroke="#e8e0a0" stroke-width=".7"/><circle cx="5" cy="5.5" r="1.3" fill="#fff8c0"/></svg></div>
<div class="a" style="left:1015px;top:123.5px"><svg width="9" height="9"><path d="M0 0l9 9M3 0l6 6M6 0l3 3" stroke="#2a2a2a" stroke-width="1"/><path d="M1 0l8 8M4 0l5 5" stroke="#aaa" stroke-width=".5"/></svg></div>
<div class="a" style="left:834px;top:151.5px"><svg width="12" height="12"><path d="M6.5 1l4.5 4.5-1.5.5-2 2 .3 1.7-.8.8L1.5 5l.8-.8 1.7.3 2-2z" fill="#eee" stroke="#222" stroke-width=".6"/><path d="M4 8.5L1 11.5" stroke="#eee" stroke-width="1.1"/></svg></div>
<div class="a" style="left:850.4px;top:151.5px"><svg width="13" height="12"><circle cx="3" cy="2.5" r="2.2" fill="#c8d86a" opacity=".85"/><rect x="6.5" y="1" width="4.5" height="8" rx="2.2" fill="#5a86d0" stroke="#1c2c4a" stroke-width=".6"/><circle cx="4.5" cy="8.5" r="3" fill="#f0f0f0" stroke="#333" stroke-width=".5"/></svg></div>
<div class="a" style="left:867px;top:155.5px"><svg width="4" height="6"><path d="M0.5 0.5L3.5 3 .5 5.5z" fill="#2a2a2a"/></svg></div>
<div class="a" style="left:882.5px;top:152.5px"><svg width="11" height="11"><circle cx="5.5" cy="5.5" r="5" fill="#3a78a8" stroke="#e8f0f8" stroke-width=".8"/><path d="M2 4c1.5-2 3 0 4-1.5M3.5 8c1-1 2.5 0 4-1" stroke="#6aa050" stroke-width="1.6" fill="none"/></svg></div>
<div class="t pt" style="left:896.6px;top:154.5px">World</div>
<div class="bx" style="left:831.5px;top:178.6px;width:156.5px;height:15.1px;border-color:#2a2a2a;background:#999"></div>
<div class="a dk" style="left:832.5px;top:179.6px;width:24.2px;height:13.1px"></div>
<div class="a" style="left:835px;top:180.5px"><svg width="20" height="12"><circle cx="5.5" cy="5.8" r="5" fill="#3a78a8" stroke="#e8f0f8" stroke-width=".8"/><path d="M2 4.3c1.5-2 3 0 4-1.5M3.5 8.3c1-1 2.5 0 4-1" stroke="#6aa050" stroke-width="1.6" fill="none"/><path d="M14 5l2-3 2 3zM14 7l2 3 2-3z" fill="#aaa"/></svg></div>
<div class="a fld" style="left:856.7px;top:179.6px;width:84.1px;height:13.1px"></div>
<div class="t pt" style="left:862px;top:183px;color:#111">World</div>
<div class="a" style="left:940.8px;top:179.6px;width:15.7px;height:13.1px;background:linear-gradient(#a5a5a5,#939393);border-left:1px solid #555"></div>
<div class="t pt" style="left:945.5px;top:183px;color:#111">F</div>
<div class="a" style="left:956.5px;top:179.6px;width:1px;height:13.1px;background:#555"></div>
<div class="a" style="left:971.6px;top:179.6px;width:1px;height:13.1px;background:#555"></div>
<div class="a" style="left:958.5px;top:180.5px"><svg width="11" height="11"><path d="M5.5 1v9M1 5.5h9" stroke="#111" stroke-width="2.6"/><path d="M5.5 1.5v8M1.5 5.5h8" stroke="#f4f4f4" stroke-width="1.3"/></svg></div>
<div class="a" style="left:974px;top:180.5px"><svg width="11" height="11"><path d="M1.5 1.5l8 8M9.5 1.5l-8 8" stroke="#111" stroke-width="2.6"/><path d="M1.8 1.8l7.4 7.4M9.2 1.8l-7.4 7.4" stroke="#f4f4f4" stroke-width="1.2"/></svg></div>
<div class="a" style="left:835px;top:206.7px"><svg width="7" height="7"><path d="M0.5 0L6.5 3.5 .5 7z" fill="#1e1e1e"/></svg></div>
<div class="t ph" style="left:844.8px;top:205.7px">Custom Properties</div>
<div class="a" style="left:1005.5px;top:208.2px"><svg width="10" height="4"><path d="M0 0.5h10M0 3h10" stroke="#9a9a9a" stroke-width=".8" stroke-dasharray="1 1"/><path d="M0 1.5h10M0 4h10" stroke="#5e5e5e" stroke-width=".6" stroke-dasharray="1 1"/></svg></div>
<div class="a" style="left:835px;top:225.5px"><svg width="7" height="7"><path d="M0.5 0L6.5 3.5 .5 7z" fill="#1e1e1e"/></svg></div>
<div class="t ph" style="left:844.8px;top:224.5px">Preview</div>
<div class="a" style="left:1005.5px;top:227px"><svg width="10" height="4"><path d="M0 0.5h10M0 3h10" stroke="#9a9a9a" stroke-width=".8" stroke-dasharray="1 1"/><path d="M0 1.5h10M0 4h10" stroke="#5e5e5e" stroke-width=".6" stroke-dasharray="1 1"/></svg></div>
<div class="a" style="left:834.5px;top:245.8px"><svg width="8" height="7"><path d="M0 0.5h7.5L3.75 7z" fill="#1e1e1e"/></svg></div>
<div class="t ph" style="left:844.8px;top:244.3px">Surface</div>
<div class="a" style="left:1005.5px;top:246.8px"><svg width="10" height="4"><path d="M0 0.5h10M0 3h10" stroke="#9a9a9a" stroke-width=".8" stroke-dasharray="1 1"/><path d="M0 1.5h10M0 4h10" stroke="#5e5e5e" stroke-width=".6" stroke-dasharray="1 1"/></svg></div>
<div class="a" style="left:835px;top:339.8px"><svg width="7" height="7"><path d="M0.5 0L6.5 3.5 .5 7z" fill="#1e1e1e"/></svg></div>
<div class="t ph" style="left:844.8px;top:338.8px">Volume</div>
<div class="a" style="left:1005.5px;top:341.3px"><svg width="10" height="4"><path d="M0 0.5h10M0 3h10" stroke="#9a9a9a" stroke-width=".8" stroke-dasharray="1 1"/><path d="M0 1.5h10M0 4h10" stroke="#5e5e5e" stroke-width=".6" stroke-dasharray="1 1"/></svg></div>
<div class="a" style="left:835px;top:406.5px"><svg width="7" height="7"><path d="M0.5 0L6.5 3.5 .5 7z" fill="#1e1e1e"/></svg></div>
<div class="t ph" style="left:844.8px;top:405.5px">Ray Visibility</div>
<div class="a" style="left:1005.5px;top:408px"><svg width="10" height="4"><path d="M0 0.5h10M0 3h10" stroke="#9a9a9a" stroke-width=".8" stroke-dasharray="1 1"/><path d="M0 1.5h10M0 4h10" stroke="#5e5e5e" stroke-width=".6" stroke-dasharray="1 1"/></svg></div>
<div class="a" style="left:834.5px;top:426.6px"><svg width="8" height="7"><path d="M0 0.5h7.5L3.75 7z" fill="#1e1e1e"/></svg></div>
<div class="t ph" style="left:844.8px;top:425.1px">Settings</div>
<div class="a" style="left:1005.5px;top:427.6px"><svg width="10" height="4"><path d="M0 0.5h10M0 3h10" stroke="#9a9a9a" stroke-width=".8" stroke-dasharray="1 1"/><path d="M0 1.5h10M0 4h10" stroke="#5e5e5e" stroke-width=".6" stroke-dasharray="1 1"/></svg></div>
<div class="a" style="left:829px;top:200.1px;width:190px;height:1px;background:#5c5c5c"></div>
<div class="a" style="left:829px;top:201.1px;width:190px;height:1px;background:#7e7e7e"></div>
<div class="a" style="left:829px;top:218.3px;width:190px;height:1px;background:#5c5c5c"></div>
<div class="a" style="left:829px;top:219.3px;width:190px;height:1px;background:#7e7e7e"></div>
<div class="a" style="left:829px;top:238.3px;width:190px;height:1px;background:#5c5c5c"></div>
<div class="a" style="left:829px;top:239.3px;width:190px;height:1px;background:#7e7e7e"></div>
<div class="a" style="left:829px;top:332.8px;width:190px;height:1px;background:#5c5c5c"></div>
<div class="a" style="left:829px;top:333.8px;width:190px;height:1px;background:#7e7e7e"></div>
<div class="a" style="left:829px;top:352.4px;width:190px;height:1px;background:#5c5c5c"></div>
<div class="a" style="left:829px;top:353.4px;width:190px;height:1px;background:#7e7e7e"></div>
<div class="a" style="left:829px;top:400.3px;width:190px;height:1px;background:#5c5c5c"></div>
<div class="a" style="left:829px;top:401.3px;width:190px;height:1px;background:#7e7e7e"></div>
<div class="a" style="left:829px;top:419.0px;width:190px;height:1px;background:#5c5c5c"></div>
<div class="a" style="left:829px;top:420.0px;width:190px;height:1px;background:#7e7e7e"></div>
<div class="a" style="left:834.5px;top:359.6px"><svg width="8" height="7"><path d="M0 0.5h7.5L3.75 7z" fill="#1e1e1e"/></svg></div>
<div class="bx" style="left:845.2px;top:357.3px;width:10.5px;height:10.5px;border-radius:2px;border-color:#2a2a2a;background:linear-gradient(#505050,#444)"></div>
<div class="t ph" style="left:860.4px;top:358.1px">Ambient Occlusion</div>
<div class="a" style="left:1005.5px;top:360.6px"><svg width="10" height="4"><path d="M0 0.5h10M0 3h10" stroke="#9a9a9a" stroke-width=".8" stroke-dasharray="1 1"/><path d="M0 1.5h10M0 4h10" stroke="#5e5e5e" stroke-width=".6" stroke-dasharray="1 1"/></svg></div>
<div class="t pt" style="left:837.4px;top:268.8px">Surface:</div>
<div class="bx" style="left:900px;top:264.1px;width:116.3px;height:14.9px;border-color:#2e2e2e;border-radius:4px;background:linear-gradient(#5e5e5e,#4e4e4e)"></div>
<div class="t pt" style="left:906.6px;top:268.3px;color:#f2f2f2">Background</div>
<div class="a" style="left:1005.5px;top:269.5px;width:4.5px;height:4.5px;border-radius:50%;border:1px solid #222;background:#888"></div>
<div class="t pt" style="left:845.2px;top:297px">Color:</div>
<div class="bx" style="left:900px;top:292.9px;width:116.3px;height:14.3px;border-color:#2e2e2e;border-radius:3px;background:linear-gradient(#5a5a5a,#4c4c4c)"></div>
<div class="a" style="left:901px;top:293.9px;width:99px;height:12.3px;background:#e9e4e6;border-radius:2px 0 0 2px"></div>
<div class="a" style="left:1005.5px;top:297.8px;width:4.5px;height:4.5px;border-radius:50%;border:1px solid #222;background:#888"></div>
<div class="t pt" style="left:845.2px;top:317px">Strength:</div>
<div class="bx" style="left:900px;top:313px;width:116.3px;height:14.6px;border-color:#2e2e2e;border-radius:7px 3px 3px 7px;background:linear-gradient(#5a5a5a,#4c4c4c)"></div>
<div class="a" style="left:901px;top:314px;width:99px;height:12.6px;border-radius:6px 0 0 6px;background:linear-gradient(#cfcfcf,#b5b5b5)"></div>
<div class="a" style="left:905px;top:318px"><svg width="4" height="5"><path d="M3.5 0L0.5 2.5 3.5 5z" fill="#8a8a8a"/></svg></div>
<div class="a" style="left:993px;top:318px"><svg width="4" height="5"><path d="M0.5 0L3.5 2.5 0.5 5z" fill="#8a8a8a"/></svg></div>
<div class="t pt" style="left:940px;top:317px;width:47.5px;text-align:right;color:#111">1.000</div>
<div class="a" style="left:1005.5px;top:318px;width:4.5px;height:4.5px;border-radius:50%;border:1px solid #222;background:#888"></div>
<div class="bx" style="left:831.4px;top:378.2px;width:88.8px;height:14.7px;border-radius:7.3px;border-color:#5a5a5a;background:linear-gradient(#7e7e7e,#727272)"></div>
<div class="t pt" style="left:842.6px;top:382.3px;color:#555">Factor:</div>
<div class="t pt" style="left:870px;top:382.3px;width:38.7px;text-align:right;color:#555">1.00</div>
<div class="bx nrow" style="left:927.5px;top:378.2px;width:88.8px;height:14.7px;border-radius:7.3px"></div>
<div class="a" style="left:931.5px;top:383px"><svg width="4" height="5"><path d="M3.5 0L0.5 2.5 3.5 5z" fill="#8a8a8a"/></svg></div>
<div class="a" style="left:1009px;top:383px"><svg width="4" height="5"><path d="M0.5 0L3.5 2.5 0.5 5z" fill="#8a8a8a"/></svg></div>
<div class="t pt" style="left:939.2px;top:382.3px;color:#111">Distance:10.000</div>
<div class="t pt" style="left:837.4px;top:450.1px">Surface:</div>
<div class="t pt" style="left:933.4px;top:450.1px">Volume:</div>
<div class="bx" style="left:833px;top:465px;width:12px;height:11px;border-radius:2px;border-color:#2a2a2a;background:linear-gradient(#505050,#444)"></div>
<div class="a" style="left:834.5px;top:464.5px"><svg width="10" height="10"><path d="M1.5 5l2.5 2.5L9 1" stroke="#111" stroke-width="2.4" fill="none"/><path d="M1.5 5l2.5 2.5L9 1" stroke="#e8e8e8" stroke-width="1.3" fill="none"/></svg></div>
<div class="t pt" style="left:850.4px;top:467.3px;color:#f0f0f0">Multiple Import...</div>
<div class="bx nrow" style="left:831.6px;top:480px;width:88.6px;height:15.4px;border-radius:7.7px"></div>
<div class="a" style="left:835.5px;top:485.2px"><svg width="4" height="5"><path d="M3.5 0L0.5 2.5 3.5 5z" fill="#8a8a8a"/></svg></div>
<div class="a" style="left:913px;top:485.2px"><svg width="4" height="5"><path d="M0.5 0L3.5 2.5 0.5 5z" fill="#8a8a8a"/></svg></div>
<div class="t pt" style="left:844px;top:484.2px;color:#111">Map Resol: 2040</div>
<div class="bx dk" style="left:927.4px;top:462.8px;width:89.1px;height:15.2px;border-color:#262626;border-radius:4px"></div>
<div class="t pt" style="left:933.5px;top:467px;color:#f2f2f2">Equiangular</div>
<div class="a" style="left:1008px;top:465px"><svg width="6" height="11"><path d="M0.5 4.5l2.5-3.5 2.5 3.5zM0.5 6.5l2.5 3.5 2.5-3.5z" fill="#ccc"/></svg></div>
<div class="bx dk" style="left:927.4px;top:480px;width:89.1px;height:15.4px;border-color:#262626;border-radius:4px"></div>
<div class="t pt" style="left:933.5px;top:484.2px;color:#f2f2f2">Linear</div>
<div class="a" style="left:1008px;top:482.3px"><svg width="6" height="11"><path d="M0.5 4.5l2.5-3.5 2.5 3.5zM0.5 6.5l2.5 3.5 2.5-3.5z" fill="#ccc"/></svg></div>
<div class="bx" style="left:929.7px;top:500.3px;width:11.5px;height:10.5px;border-radius:2px;border-color:#2a2a2a;background:linear-gradient(#505050,#444)"></div>
<div class="t pt" style="left:946.1px;top:501.6px">Homogeneous</div>
<div class="a" style="left:825px;top:545px"><svg width="10" height="10"><path d="M0 1l9 9M0 4l6 6M0 7l3 3" stroke="#2a2a2a" stroke-width="1"/><path d="M0 2l8 8M0 5l5 5" stroke="#aaa" stroke-width=".5"/></svg></div>
<div class="a" style="left:824px;top:37px;width:1.2px;height:518px;background:#151515"></div>
<!--/RIGHT-->
</body></html>
